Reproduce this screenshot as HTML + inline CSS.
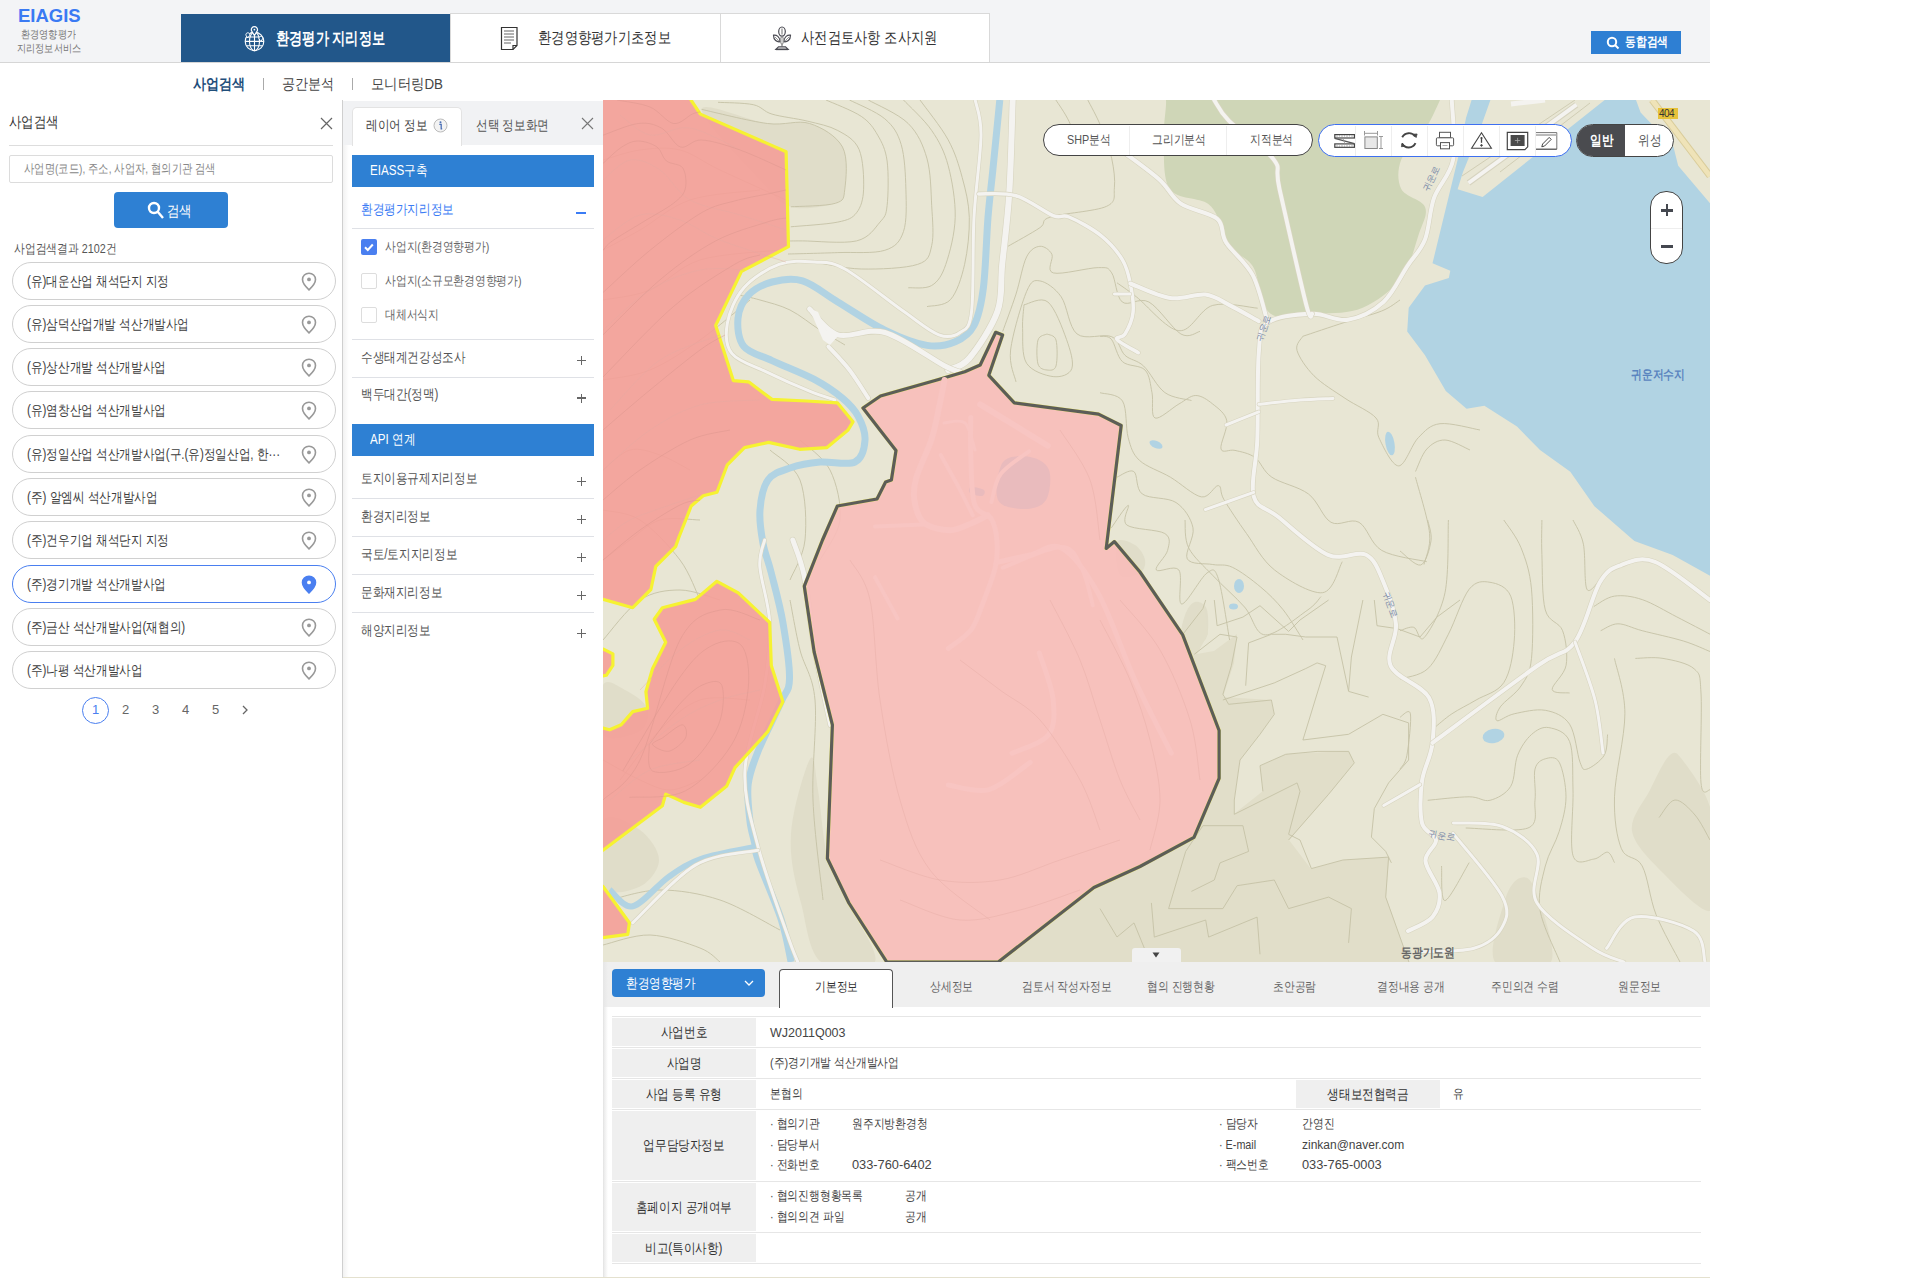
<!DOCTYPE html>
<html><head><meta charset="utf-8">
<style>
*{box-sizing:border-box;margin:0;padding:0}
html,body{width:1920px;height:1278px;overflow:hidden;background:#fff;font-family:"Liberation Sans",sans-serif;color:#333}
.a{position:absolute}
.k{display:inline-block;transform:scaleX(.83);transform-origin:0 50%;white-space:nowrap}
.c{display:inline-block;transform:scaleX(.83);transform-origin:50% 50%;white-space:nowrap}
.t{position:absolute;white-space:nowrap;line-height:1}
</style></head><body>
<!-- ============ HEADER ============ -->
<div class="a" style="left:0;top:0;width:1710px;height:63px;background:#f3f4f6;border-bottom:1px solid #d6d6d6"></div>
<div class="t" style="left:18px;top:7px;font-size:18.5px;font-weight:bold;color:#3a7af3">EIAGIS</div>
<div class="t" style="left:21px;top:29px;font-size:11px;color:#777"><span class="k">환경영향평가</span></div>
<div class="t" style="left:17px;top:43px;font-size:11px;color:#777"><span class="k">지리정보서비스</span></div>
<div class="a" style="left:181px;top:14px;width:269px;height:48px;background:#22578a"></div>
<div class="a" style="left:450px;top:13px;width:540px;height:49px;background:#fff;border:1px solid #d9d9d9;border-bottom:none"></div>
<div class="a" style="left:720px;top:13px;width:1px;height:49px;background:#d9d9d9"></div>
<!-- globe icon -->
<svg class="a" style="left:240px;top:24px" width="30" height="30" viewBox="240 24 30 30" fill="none" stroke="#fff" stroke-width="1.1">
 <circle cx="254.5" cy="41.4" r="9.3"/><ellipse cx="254.5" cy="41.4" rx="5" ry="9.3"/>
 <path d="M245.2 41.4h18.6M246.3 37h16.4M246.3 45.8h16.4M254.5 32.1v18.6"/>
 <path d="M254.4 35.5 L251.4 30.6 A3.1 3.1 0 1 1 257.4 30.6 Z" fill="#22578a" stroke-width="1.2"/><circle cx="254.4" cy="29.6" r="0.9" fill="#fff" stroke="none"/>
 <path d="M247.8 38 L246 35.3 A1.9 1.9 0 1 1 249.6 35.3 Z" fill="#22578a" stroke-width="1"/>
 <path d="M260.8 41.5 L259 38.8 A1.9 1.9 0 1 1 262.6 38.8 Z" fill="#22578a" stroke-width="1"/>
</svg>
<div class="t" style="left:276px;top:30px;font-size:16.5px;font-weight:bold;color:#fff"><span class="k" style="transform:scaleX(.775)">환경평가 지리정보</span></div>
<!-- doc icon -->
<svg class="a" style="left:500px;top:26px" width="20" height="25" viewBox="0 0 20 25" fill="none" stroke="#333" stroke-width="1.2">
 <path d="M1.5 1.5h15.5v18l-4 4h-11.5z"/><path d="M17 19.5h-4v4" /><path d="M4 5h10M4 8h10M4 11h10M4 14h10M4 17h7" stroke="#666" stroke-width="1"/>
</svg>
<div class="t" style="left:538px;top:30px;font-size:15.5px;color:#333"><span class="k">환경영향평가기초정보</span></div>
<!-- plant icon -->
<svg class="a" style="left:765px;top:22px" width="35" height="32" viewBox="765 22 35 32" fill="none" stroke="#4a4a52" stroke-width="1.2">
 <ellipse cx="782" cy="31.6" rx="3.3" ry="4.6"/><path d="M782 28.5v6" stroke="#888"/>
 <path d="M773.5 35.2c3 -0.5 6.5 1.5 6.5 6.5c-3 0.5 -6.5 -1.5 -6.5 -6.5z"/><path d="M775 37l3.8 3.8" stroke="#888" stroke-width="0.9"/>
 <path d="M790.5 35.2c-3 -0.5 -6.5 1.5 -6.5 6.5c3 0.5 6.5 -1.5 6.5 -6.5z"/><path d="M789 37l-3.8 3.8" stroke="#888" stroke-width="0.9"/>
 <rect x="780.7" y="37" width="2.6" height="7" rx="1.2" fill="#ddd" stroke="#777" stroke-width="0.8"/>
 <path d="M782 44v2.5" stroke="#777"/>
 <path d="M778.5 46.8h7l2.6 2.6h-12.2z" fill="#fff"/><path d="M775.8 49.4h12.4" stroke-width="1.5"/>
</svg>
<div class="t" style="left:801px;top:30px;font-size:15.5px;color:#333"><span class="k">사전검토사항 조사지원</span></div>
<!-- unified search btn -->
<div class="a" style="left:1591px;top:31px;width:90px;height:23px;background:#2e7fd3"></div>
<svg class="a" style="left:1606px;top:36px" width="14" height="14" viewBox="0 0 14 14" fill="none" stroke="#fff" stroke-width="2"><circle cx="6" cy="6" r="4.2"/><path d="M9 9l3.5 3.5"/></svg>
<div class="t" style="left:1625px;top:36px;font-size:12.5px;font-weight:bold;color:#fff"><span class="k">동합검색</span></div>
<!-- ============ SUB NAV ============ -->
<div class="t" style="left:193px;top:76px;font-size:15px;font-weight:bold;color:#1f4e7a"><span class="k" style="transform:scaleX(.87)">사업검색</span></div>
<div class="a" style="left:263px;top:78px;width:1px;height:12px;background:#aaa"></div>
<div class="t" style="left:282px;top:76px;font-size:15px;color:#444"><span class="k" style="transform:scaleX(.87)">공간분석</span></div>
<div class="a" style="left:352px;top:78px;width:1px;height:12px;background:#aaa"></div>
<div class="t" style="left:371px;top:76px;font-size:15px;color:#444"><span class="k" style="transform:scaleX(.89)">모니터링DB</span></div>
<!-- ============ LEFT PANEL ============ -->
<div class="t" style="left:9px;top:114px;font-size:15px;color:#333"><span class="k">사업검색</span></div>
<svg class="a" style="left:320px;top:117px" width="13" height="13" viewBox="0 0 13 13" stroke="#666" stroke-width="1.2"><path d="M1 1l11 11M12 1L1 12"/></svg>
<div class="a" style="left:9px;top:145px;width:324px;height:1px;background:#ddd"></div>
<div class="a" style="left:9px;top:155px;width:324px;height:28px;border:1px solid #dcdcdc;border-radius:2px"></div>
<div class="t" style="left:24px;top:163px;font-size:12.7px;color:#888"><span class="k" style="transform:scaleX(.795)">사업명(코드), 주소, 사업자, 협의기관 검색</span></div>
<div class="a" style="left:114px;top:192px;width:114px;height:36px;background:#2e80d3;border-radius:4px"></div>
<svg class="a" style="left:147px;top:201px" width="18" height="19" viewBox="0 0 18 19" fill="none" stroke="#fff" stroke-width="2.4"><circle cx="7" cy="7" r="5"/><path d="M10.5 10.5l5.5 6.5"/></svg>
<div class="t" style="left:167px;top:203px;font-size:15px;color:#fff"><span class="k">검색</span></div>
<div class="t" style="left:14px;top:242px;font-size:13px;color:#555"><span class="k">사업검색결과 2102건</span></div>
<div class="a" style="left:12px;top:262px;width:324px;height:38px;border:1px solid #d0d0d0;border-radius:19px"></div>
<div class="t" style="left:27px;top:274px;font-size:14px;color:#3d3d3d"><span class="k">(유)대운산업 채석단지 지정</span></div>
<svg class="a" style="left:301px;top:272px" width="16" height="19" viewBox="0 0 16 19"><path d="M8 1.2C4.3 1.2 1.5 4 1.5 7.4c0 4.2 6.5 10.4 6.5 10.4s6.5-6.2 6.5-10.4C14.5 4 11.7 1.2 8 1.2z" fill="none" stroke="#999" stroke-width="1.6"/><circle cx="8" cy="7.4" r="1.9" fill="#999"/></svg>
<div class="a" style="left:12px;top:305px;width:324px;height:38px;border:1px solid #d0d0d0;border-radius:19px"></div>
<div class="t" style="left:27px;top:317px;font-size:14px;color:#3d3d3d"><span class="k">(유)삼덕산업개발 석산개발사업</span></div>
<svg class="a" style="left:301px;top:315px" width="16" height="19" viewBox="0 0 16 19"><path d="M8 1.2C4.3 1.2 1.5 4 1.5 7.4c0 4.2 6.5 10.4 6.5 10.4s6.5-6.2 6.5-10.4C14.5 4 11.7 1.2 8 1.2z" fill="none" stroke="#999" stroke-width="1.6"/><circle cx="8" cy="7.4" r="1.9" fill="#999"/></svg>
<div class="a" style="left:12px;top:348px;width:324px;height:38px;border:1px solid #d0d0d0;border-radius:19px"></div>
<div class="t" style="left:27px;top:360px;font-size:14px;color:#3d3d3d"><span class="k">(유)상산개발 석산개발사업</span></div>
<svg class="a" style="left:301px;top:358px" width="16" height="19" viewBox="0 0 16 19"><path d="M8 1.2C4.3 1.2 1.5 4 1.5 7.4c0 4.2 6.5 10.4 6.5 10.4s6.5-6.2 6.5-10.4C14.5 4 11.7 1.2 8 1.2z" fill="none" stroke="#999" stroke-width="1.6"/><circle cx="8" cy="7.4" r="1.9" fill="#999"/></svg>
<div class="a" style="left:12px;top:391px;width:324px;height:38px;border:1px solid #d0d0d0;border-radius:19px"></div>
<div class="t" style="left:27px;top:403px;font-size:14px;color:#3d3d3d"><span class="k">(유)염창산업 석산개발사업</span></div>
<svg class="a" style="left:301px;top:401px" width="16" height="19" viewBox="0 0 16 19"><path d="M8 1.2C4.3 1.2 1.5 4 1.5 7.4c0 4.2 6.5 10.4 6.5 10.4s6.5-6.2 6.5-10.4C14.5 4 11.7 1.2 8 1.2z" fill="none" stroke="#999" stroke-width="1.6"/><circle cx="8" cy="7.4" r="1.9" fill="#999"/></svg>
<div class="a" style="left:12px;top:435px;width:324px;height:38px;border:1px solid #d0d0d0;border-radius:19px"></div>
<div class="t" style="left:27px;top:447px;font-size:14px;color:#3d3d3d"><span class="k">(유)정일산업 석산개발사업(구.(유)정일산업, 한···</span></div>
<svg class="a" style="left:301px;top:445px" width="16" height="19" viewBox="0 0 16 19"><path d="M8 1.2C4.3 1.2 1.5 4 1.5 7.4c0 4.2 6.5 10.4 6.5 10.4s6.5-6.2 6.5-10.4C14.5 4 11.7 1.2 8 1.2z" fill="none" stroke="#999" stroke-width="1.6"/><circle cx="8" cy="7.4" r="1.9" fill="#999"/></svg>
<div class="a" style="left:12px;top:478px;width:324px;height:38px;border:1px solid #d0d0d0;border-radius:19px"></div>
<div class="t" style="left:27px;top:490px;font-size:14px;color:#3d3d3d"><span class="k">(주) 알엠씨 석산개발사업</span></div>
<svg class="a" style="left:301px;top:488px" width="16" height="19" viewBox="0 0 16 19"><path d="M8 1.2C4.3 1.2 1.5 4 1.5 7.4c0 4.2 6.5 10.4 6.5 10.4s6.5-6.2 6.5-10.4C14.5 4 11.7 1.2 8 1.2z" fill="none" stroke="#999" stroke-width="1.6"/><circle cx="8" cy="7.4" r="1.9" fill="#999"/></svg>
<div class="a" style="left:12px;top:521px;width:324px;height:38px;border:1px solid #d0d0d0;border-radius:19px"></div>
<div class="t" style="left:27px;top:533px;font-size:14px;color:#3d3d3d"><span class="k">(주)건우기업 채석단지 지정</span></div>
<svg class="a" style="left:301px;top:531px" width="16" height="19" viewBox="0 0 16 19"><path d="M8 1.2C4.3 1.2 1.5 4 1.5 7.4c0 4.2 6.5 10.4 6.5 10.4s6.5-6.2 6.5-10.4C14.5 4 11.7 1.2 8 1.2z" fill="none" stroke="#999" stroke-width="1.6"/><circle cx="8" cy="7.4" r="1.9" fill="#999"/></svg>
<div class="a" style="left:12px;top:565px;width:324px;height:38px;border:1px solid #4a7ff0;border-radius:19px"></div>
<div class="t" style="left:27px;top:577px;font-size:14px;color:#3d3d3d"><span class="k">(주)경기개발 석산개발사업</span></div>
<svg class="a" style="left:301px;top:575px" width="16" height="19" viewBox="0 0 16 19"><path d="M8 1.2C4.3 1.2 1.5 4 1.5 7.4c0 4.2 6.5 10.4 6.5 10.4s6.5-6.2 6.5-10.4C14.5 4 11.7 1.2 8 1.2z" fill="#4a7ff0" stroke="#4a7ff0" stroke-width="1.6"/><circle cx="8" cy="7.4" r="1.9" fill="#fff"/></svg>
<div class="a" style="left:12px;top:608px;width:324px;height:38px;border:1px solid #d0d0d0;border-radius:19px"></div>
<div class="t" style="left:27px;top:620px;font-size:14px;color:#3d3d3d"><span class="k">(주)금산 석산개발사업(재협의)</span></div>
<svg class="a" style="left:301px;top:618px" width="16" height="19" viewBox="0 0 16 19"><path d="M8 1.2C4.3 1.2 1.5 4 1.5 7.4c0 4.2 6.5 10.4 6.5 10.4s6.5-6.2 6.5-10.4C14.5 4 11.7 1.2 8 1.2z" fill="none" stroke="#999" stroke-width="1.6"/><circle cx="8" cy="7.4" r="1.9" fill="#999"/></svg>
<div class="a" style="left:12px;top:651px;width:324px;height:38px;border:1px solid #d0d0d0;border-radius:19px"></div>
<div class="t" style="left:27px;top:663px;font-size:14px;color:#3d3d3d"><span class="k">(주)나평 석산개발사업</span></div>
<svg class="a" style="left:301px;top:661px" width="16" height="19" viewBox="0 0 16 19"><path d="M8 1.2C4.3 1.2 1.5 4 1.5 7.4c0 4.2 6.5 10.4 6.5 10.4s6.5-6.2 6.5-10.4C14.5 4 11.7 1.2 8 1.2z" fill="none" stroke="#999" stroke-width="1.6"/><circle cx="8" cy="7.4" r="1.9" fill="#999"/></svg>
<div class="a" style="left:82px;top:697px;width:27px;height:27px;border:1px solid #4a7ff0;border-radius:50%"></div>
<div class="t" style="left:85.5px;top:703px;width:20px;text-align:center;font-size:13px;color:#4a7ff0">1</div>
<div class="t" style="left:115.5px;top:703px;width:20px;text-align:center;font-size:13px;color:#666">2</div>
<div class="t" style="left:145.5px;top:703px;width:20px;text-align:center;font-size:13px;color:#666">3</div>
<div class="t" style="left:175.5px;top:703px;width:20px;text-align:center;font-size:13px;color:#666">4</div>
<div class="t" style="left:205.5px;top:703px;width:20px;text-align:center;font-size:13px;color:#666">5</div>
<svg class="a" style="left:241px;top:705px" width="8" height="10" viewBox="0 0 8 10" fill="none" stroke="#666" stroke-width="1.3"><path d="M2 1l4 4-4 4"/></svg>
<!--LEFT-->
<div class="a" style="left:342px;top:100px;width:1px;height:1178px;background:#cfcfcf"></div>
<div class="a" style="left:343px;top:145px;width:6px;height:1133px;background:linear-gradient(to right,#f2f2f2,rgba(255,255,255,0))"></div>
<div class="a" style="left:343px;top:101px;width:260px;height:44px;background:#f1f2f4"></div>
<div class="a" style="left:352px;top:107px;width:110px;height:39px;background:#fff;border:1px solid #e3e3e3;border-bottom:none;border-radius:5px 5px 0 0"></div>
<div class="t" style="left:366px;top:118px;font-size:14px;color:#444"><span class="k">레이어 정보</span></div>
<svg class="a" style="left:433px;top:118px" width="15" height="15" viewBox="0 0 15 15"><circle cx="7.5" cy="7.5" r="6.5" fill="#f3f3f3" stroke="#bbb"/><circle cx="7.5" cy="4.3" r="1" fill="#4a6fb5"/><path d="M6.3 6.3h1.9v4.5h1" stroke="#4a6fb5" stroke-width="1.3" fill="none"/></svg>
<div class="t" style="left:476px;top:118px;font-size:14px;color:#555"><span class="k">선택 정보화면</span></div>
<svg class="a" style="left:581px;top:117px" width="13" height="13" viewBox="0 0 13 13" stroke="#777" stroke-width="1.1"><path d="M1 1l11 11M12 1L1 12"/></svg>
<div class="a" style="left:352px;top:155px;width:242px;height:32px;background:#2e80d3"></div>
<div class="t" style="left:370px;top:163px;font-size:14px;color:#fff"><span class="k">EIASS구축</span></div>
<div class="t" style="left:361px;top:202px;font-size:14px;color:#3b7cf5"><span class="k">환경평가지리정보</span></div>
<div class="a" style="left:576px;top:212px;width:10px;height:2px;background:#3b7cf5"></div>
<div class="a" style="left:352px;top:228px;width:242px;height:1px;background:#dfe1e6"></div>
<div class="a" style="left:361px;top:239px;width:16px;height:16px;background:#4a7ff0;border-radius:2px"></div>
<svg class="a" style="left:361px;top:239px" width="16" height="16" viewBox="0 0 16 16" fill="none" stroke="#fff" stroke-width="2"><path d="M4 8.2l2.8 2.8 5-5.5"/></svg>
<div class="t" style="left:385px;top:240px;font-size:13px;color:#666"><span class="k">사업지(환경영향평가)</span></div>
<div class="a" style="left:361px;top:273px;width:16px;height:16px;border:1px solid #ddd;border-radius:2px;background:#fff"></div>
<div class="t" style="left:385px;top:274px;font-size:13px;color:#666"><span class="k">사업지(소규모환경영향평가)</span></div>
<div class="a" style="left:361px;top:306.5px;width:16px;height:16px;border:1px solid #ddd;border-radius:2px;background:#fff"></div>
<div class="t" style="left:385px;top:307.5px;font-size:13px;color:#666"><span class="k">대체서식지</span></div>
<div class="a" style="left:352px;top:339px;width:242px;height:1px;background:#dfe1e6"></div>
<div class="t" style="left:361px;top:350px;font-size:14px;color:#555"><span class="k">수생태계건강성조사</span></div>
<div class="a" style="left:577px;top:359.9px;width:9px;height:1.3px;background:#666"></div>
<div class="a" style="left:580.9px;top:356.0px;width:1.3px;height:9px;background:#666"></div>
<div class="a" style="left:352px;top:377px;width:242px;height:1px;background:#dfe1e6"></div>
<div class="t" style="left:361px;top:387px;font-size:14px;color:#555"><span class="k">백두대간(정맥)</span></div>
<div class="a" style="left:577px;top:397.4px;width:9px;height:1.3px;background:#666"></div>
<div class="a" style="left:580.9px;top:393.5px;width:1.3px;height:9px;background:#666"></div>
<div class="a" style="left:352px;top:424px;width:242px;height:32px;background:#2e80d3"></div>
<div class="t" style="left:370px;top:432px;font-size:14px;color:#fff"><span class="k">API 연계</span></div>
<div class="t" style="left:361px;top:471px;font-size:14px;color:#555"><span class="k">토지이용규제지리정보</span></div>
<div class="a" style="left:577px;top:480.9px;width:9px;height:1.3px;background:#666"></div>
<div class="a" style="left:580.9px;top:477.0px;width:1.3px;height:9px;background:#666"></div>
<div class="a" style="left:352px;top:498px;width:242px;height:1px;background:#dfe1e6"></div>
<div class="t" style="left:361px;top:509px;font-size:14px;color:#555"><span class="k">환경지리정보</span></div>
<div class="a" style="left:577px;top:518.9px;width:9px;height:1.3px;background:#666"></div>
<div class="a" style="left:580.9px;top:515.0px;width:1.3px;height:9px;background:#666"></div>
<div class="a" style="left:352px;top:536px;width:242px;height:1px;background:#dfe1e6"></div>
<div class="t" style="left:361px;top:547px;font-size:14px;color:#555"><span class="k">국토/토지지리정보</span></div>
<div class="a" style="left:577px;top:556.9px;width:9px;height:1.3px;background:#666"></div>
<div class="a" style="left:580.9px;top:553.0px;width:1.3px;height:9px;background:#666"></div>
<div class="a" style="left:352px;top:574px;width:242px;height:1px;background:#dfe1e6"></div>
<div class="t" style="left:361px;top:585px;font-size:14px;color:#555"><span class="k">문화재지리정보</span></div>
<div class="a" style="left:577px;top:594.9px;width:9px;height:1.3px;background:#666"></div>
<div class="a" style="left:580.9px;top:591.0px;width:1.3px;height:9px;background:#666"></div>
<div class="a" style="left:352px;top:612px;width:242px;height:1px;background:#dfe1e6"></div>
<div class="t" style="left:361px;top:623px;font-size:14px;color:#555"><span class="k">해양지리정보</span></div>
<div class="a" style="left:577px;top:632.9px;width:9px;height:1.3px;background:#666"></div>
<div class="a" style="left:580.9px;top:629.0px;width:1.3px;height:9px;background:#666"></div>
<!--LAYER-->
<!--MAPSTART--><svg class="a" style="left:603px;top:100px" width="1107" height="862" viewBox="603 100 1107 862">
<rect x="603" y="100" width="1107" height="862" fill="#e8e6d4"/>
<path d="M701.6,109.4 C702.8,100.0 749.4,121.2 767.4,123.5 C785.4,125.8 797.1,119.6 809.6,123.5 C822.1,127.4 836.6,136.1 842.5,147.0 C848.4,157.9 846.0,179.8 844.8,189.2 C843.6,198.6 844.4,200.4 835.4,203.3 C826.4,206.2 803.4,210.7 790.8,206.8 C778.2,202.9 774.9,196.2 760.0,180.0 C745.1,163.8 700.4,118.8 701.6,109.4 Z" fill="#e0ddc9"/>
<path d="M811.0,757.8 C814.9,754.4 815.2,773.0 818.0,790.0 C820.8,807.0 823.0,841.2 828.0,860.0 C833.0,878.8 840.2,886.0 848.0,903.0 C855.8,920.0 879.5,952.0 875.0,961.8 C870.5,971.6 833.1,971.6 820.8,961.8 C808.5,952.0 806.0,921.0 801.0,903.0 C796.0,885.0 792.2,868.9 791.1,853.5 C790.0,838.1 791.1,826.6 794.4,810.6 C797.7,794.6 807.1,761.2 811.0,757.8 Z" fill="#e0ddc9"/>
<path d="M603.0,685.0 C606.7,677.5 617.7,686.2 625.0,690.0 C632.3,693.8 644.5,701.2 647.0,708.0 C649.5,714.8 647.3,726.5 640.0,731.0 C632.7,735.5 609.2,742.7 603.0,735.0 C596.8,727.3 599.3,692.5 603.0,685.0 Z" fill="#e0ddc9"/>
<path d="M603.0,820.5 C609.2,811.1 630.7,823.4 640.0,830.0 C649.3,836.6 659.0,850.6 659.0,860.0 C659.0,869.4 649.3,882.1 640.0,886.5 C630.7,890.9 609.2,897.5 603.0,886.5 C596.8,875.5 596.8,829.9 603.0,820.5 Z" fill="#e0ddc9"/>
<path d="M1117.0,542.0 C1119.5,537.0 1130.3,542.0 1135.0,545.0 C1139.7,548.0 1144.2,555.3 1145.0,560.0 C1145.8,564.7 1144.2,570.5 1140.0,573.0 C1135.8,575.5 1123.8,580.2 1120.0,575.0 C1116.2,569.8 1114.5,547.0 1117.0,542.0 Z" fill="#e0ddc9"/>
<path d="M1195.0,602.0 C1198.7,601.2 1205.3,603.7 1207.0,610.0 C1208.7,616.3 1209.2,635.0 1205.0,640.0 C1200.8,645.0 1185.3,644.2 1182.0,640.0 C1178.7,635.8 1182.8,621.3 1185.0,615.0 C1187.2,608.7 1191.3,602.8 1195.0,602.0 Z" fill="#e0ddc9"/>
<path d="M1183.0,634.0 L1204.0,603.0 L1208.0,634.0 L1197.0,654.0 L1214.0,651.0 L1237.0,634.0 L1234.0,663.0 L1223.0,697.0 L1271.0,700.0 L1274.0,714.0 L1260.0,734.0 L1240.0,760.0 L1234.0,800.0 L1234.0,814.0 L1263.0,791.0 L1260.0,766.0 L1286.0,754.0 L1349.0,751.0 L1354.0,763.0 L1329.0,794.0 L1289.0,840.0 L1311.0,869.0 L1343.0,860.0 L1389.0,857.0 L1386.0,897.0 L1400.0,937.0 L1410.0,965.0 L998.0,965.0 L1094.0,888.0 L1194.0,837.0 L1219.0,778.0 L1219.0,730.0 Z" fill="#e1dec9"/>
<path d="M1632.0,831.0 C1629.8,817.2 1643.7,802.7 1650.0,790.0 C1656.3,777.3 1664.3,759.7 1670.0,755.0 C1675.7,750.3 1677.3,753.3 1684.0,762.0 C1690.7,770.7 1705.3,790.7 1710.0,807.0 C1714.7,823.3 1712.0,842.7 1712.0,860.0 C1712.0,877.3 1718.2,908.8 1710.0,911.0 C1701.8,913.2 1676.0,886.3 1663.0,873.0 C1650.0,859.7 1634.2,844.8 1632.0,831.0 Z" fill="#e0ddc9"/>
<path d="M1520.0,878.0 C1525.0,876.3 1529.8,876.0 1535.0,890.0 C1540.2,904.0 1557.7,950.0 1551.0,962.0 C1544.3,974.0 1502.7,972.3 1495.0,962.0 C1487.3,951.7 1500.8,914.0 1505.0,900.0 C1509.2,886.0 1515.0,879.7 1520.0,878.0 Z" fill="#e0ddc9"/>
<path d="M1160.0,88.0 C1137.7,91.3 1165.4,91.6 1166.0,100.0 C1166.6,108.4 1163.2,123.8 1163.8,138.6 C1164.4,153.4 1162.3,178.1 1169.7,189.0 C1177.1,199.9 1199.4,197.1 1208.3,204.0 C1217.2,210.9 1219.5,223.2 1223.0,230.6 C1226.5,238.0 1224.0,242.6 1229.0,248.5 C1234.0,254.4 1245.9,255.4 1252.8,266.3 C1259.7,277.2 1259.7,305.9 1270.6,313.8 C1281.5,321.7 1302.7,314.8 1318.0,313.8 C1333.3,312.8 1348.8,313.8 1362.7,307.8 C1376.6,301.8 1391.9,290.4 1401.3,278.0 C1410.7,265.6 1415.0,245.4 1419.0,233.6 C1423.0,221.8 1428.0,214.3 1425.0,206.9 C1422.0,199.5 1405.2,196.9 1401.3,189.0 C1397.3,181.1 1397.3,169.3 1401.3,159.4 C1405.2,149.5 1418.5,139.6 1425.0,129.7 C1431.5,119.8 1436.7,107.0 1440.0,100.0 C1443.3,93.0 1468.3,91.3 1445.0,88.0 C1421.7,84.7 1347.5,80.0 1300.0,80.0 C1252.5,80.0 1182.3,84.7 1160.0,88.0 Z" fill="#cfd6b7"/>
<path d="M1471.6,100.0 L1466.0,118.0 L1457.7,159.4 L1432.5,263.3 L1450.3,270.7 L1448.8,278.1 L1425.0,285.6 L1408.7,307.8 L1407.2,331.6 L1425.0,355.3 L1445.8,391.0 L1466.6,408.8 L1484.4,405.8 L1517.0,426.6 L1540.0,450.0 L1570.3,471.8 L1594.4,506.2 L1622.0,530.3 L1634.4,541.0 L1672.7,555.0 L1710.0,575.7 L1710.0,203.3 L1678.2,165.7 L1673.5,147.0 L1640.6,112.5 L1636.0,100.0 Z" fill="#b1d3e3"/>
<path d="M1490.4,100.0 L1604.7,100.0 L1482.6,197.0 L1457.6,189.2 L1463.0,172.0 L1478.0,135.0 Z" fill="#e8e6d4"/>
<path d="M1468.5,183 L1576.5,104.7" stroke="#d6d3bf" stroke-width="6" fill="none"/><path d="M1468.5,183 L1576.5,104.7" stroke="#f4f3f0" stroke-width="4" fill="none"/>
<path d="M1500,172 L1590,103" stroke="#cdcab0" stroke-width="0.9" fill="none"/><path d="M1462,176 L1575,100" stroke="#cdcab0" stroke-width="0.9" fill="none"/>
<path d="M1511,104 Q1530,102 1545,100" stroke="#f4f3f0" stroke-width="5" fill="none"/>
<path d="M1652,100 L1710,176" stroke="#d9cc9a" stroke-width="7" fill="none"/><path d="M1652,100 L1710,176" stroke="#efe3b8" stroke-width="5" fill="none"/>
<ellipse cx="1156" cy="444.5" rx="7" ry="3.5" transform="rotate(25 1156 444.5)" fill="#b1d3e3"/>
<ellipse cx="1239" cy="586" rx="5" ry="7" transform="rotate(0 1239 586)" fill="#b1d3e3"/>
<ellipse cx="1233.5" cy="606.5" rx="4.5" ry="3" transform="rotate(0 1233.5 606.5)" fill="#b1d3e3"/>
<ellipse cx="1493.5" cy="736" rx="11" ry="7" transform="rotate(-10 1493.5 736)" fill="#b1d3e3"/>
<ellipse cx="1390" cy="443.5" rx="4.5" ry="12" transform="rotate(-10 1390 443.5)" fill="#b1d3e3"/>
<path d="M1194.3,654.3 L1220.0,634.3 L1237.0,637.0 L1231.4,665.7 L1222.9,694.3 L1228.6,704.3 L1271.4,700.0 L1274.3,714.3 L1260.0,734.3 L1240.0,760.0 L1234.3,800.0 L1234.3,814.3 L1297.1,782.9 L1300.0,791.4 L1288.6,834.3 L1300.0,840.0 L1311.4,868.6 L1342.9,860.0 L1388.6,857.1 L1385.7,897.1 L1400.0,937.1 L1410.0,965.0" fill="none" stroke="#c5c2a6" stroke-width="0.9" stroke-linejoin="round"/>
<path d="M1302.9,740.0 L1325.7,665.7 L1317.1,662.9 L1305.7,668.6 L1274.3,682.9 L1222.9,700.0" fill="none" stroke="#c5c2a6" stroke-width="0.9" stroke-linejoin="round"/>
<path d="M1302.9,740.0 L1348.6,734.3 L1382.9,714.3 L1408.6,722.9 L1408.6,760.0 L1388.6,782.9 L1374.3,808.6 L1371.4,837.1 L1385.7,851.4 L1391.4,862.9" fill="none" stroke="#c5c2a6" stroke-width="0.9" stroke-linejoin="round"/>
<path d="M1262.9,791.4 L1260.0,765.7 L1285.7,754.3 L1317.1,751.4 L1348.6,751.4 L1354.3,762.9 L1328.6,794.3 L1288.6,840.0" fill="none" stroke="#c5c2a6" stroke-width="0.9" stroke-linejoin="round"/>
<path d="M1191.4,891.4 L1214.3,880.0 L1220.0,862.9 L1248.6,851.4 L1242.9,825.7 L1202.9,825.7 L1185.7,851.4 L1168.6,908.6 L1222.9,908.6 L1237.1,885.7 L1274.3,880.0 L1288.6,908.6 L1328.6,897.1 L1351.4,908.6 L1348.6,942.9" fill="none" stroke="#c5c2a6" stroke-width="0.9" stroke-linejoin="round"/>
<path d="M1151.4,902.9 L1154.3,937.1 L1205.7,920.0 L1208.6,937.1 L1257.1,917.1 L1260.0,954.3" fill="none" stroke="#c5c2a6" stroke-width="0.9" stroke-linejoin="round"/>
<path d="M1100.0,908.6 L1117.0,937.0 L1134.0,922.9 L1150.0,962.0" fill="none" stroke="#c5c2a6" stroke-width="0.9" stroke-linejoin="round"/>
<path d="M1245.7,685.7 L1248.6,642.9 L1271.4,634.3 L1285.7,634.3 L1305.7,637.0 L1337.0,637.0 L1348.6,691.4 L1368.6,697.1" fill="none" stroke="#c5c2a6" stroke-width="0.9" stroke-linejoin="round"/>
<path d="M1214.3,600.0 L1217.1,625.7 L1242.9,617.1 L1260.0,605.7 L1288.6,631.4 L1300.0,620.0 L1328.6,600.0" fill="none" stroke="#c5c2a6" stroke-width="0.9" stroke-linejoin="round"/>
<path d="M1362.9,600.0 L1351.4,657.0 L1348.6,691.0" fill="none" stroke="#c5c2a6" stroke-width="0.9" stroke-linejoin="round"/>
<path d="M1374.3,600.0 L1377.0,625.7 L1397.0,628.6 L1420.0,637.0 L1437.0,617.0 L1460.0,600.0" fill="none" stroke="#c5c2a6" stroke-width="0.9" stroke-linejoin="round"/>
<path d="M1182.9,634.3 L1202.9,608.6 L1205.7,600.0" fill="none" stroke="#c5c2a6" stroke-width="0.9" stroke-linejoin="round"/>
<path d="M718.0,102.3 C723.9,102.7 744.3,102.7 753.3,104.7 C762.3,106.7 763.0,111.4 772.0,114.1 C781.0,116.8 796.3,118.4 807.3,121.1 C818.3,123.8 829.2,125.8 837.8,130.5 C846.4,135.2 854.7,139.5 859.0,149.3 C863.3,159.1 864.0,178.6 863.6,189.2 C863.2,199.8 860.9,207.2 856.6,212.7 C852.3,218.2 848.8,219.8 837.8,222.1 C826.8,224.4 798.6,226.0 790.8,226.8" fill="none" stroke="#c5c2a6" stroke-width="0.9"/>
<path d="M826.0,100.0 C831.9,102.7 852.7,110.5 861.3,116.4 C869.9,122.3 873.4,127.8 877.7,135.2 C882.0,142.6 885.5,149.2 887.1,161.0 C888.7,172.8 888.3,195.5 887.1,205.7 C885.9,215.9 885.1,216.2 880.0,222.1 C874.9,228.0 869.5,237.8 856.6,240.9 C843.7,244.0 814.0,240.9 802.6,240.9 C791.2,240.9 790.4,241.0 788.0,241.0" fill="none" stroke="#c5c2a6" stroke-width="0.9"/>
<path d="M849.5,100.0 C855.4,103.1 876.2,111.4 884.8,118.8 C893.4,126.2 897.7,132.9 901.2,144.6 C904.7,156.3 905.5,174.7 905.9,189.2 C906.3,203.7 907.0,221.3 903.5,231.5 C900.0,241.7 895.8,246.8 884.8,250.3 C873.8,253.8 853.9,252.0 837.8,252.6 C821.7,253.2 796.3,253.8 788.0,254.0" fill="none" stroke="#c5c2a6" stroke-width="0.9"/>
<path d="M868.3,100.0 C874.9,103.9 898.4,113.7 908.2,123.5 C918.0,133.3 923.1,145.0 927.0,158.7 C930.9,172.4 930.9,191.2 931.7,205.7 C932.5,220.2 934.1,235.8 931.7,245.6 C929.4,255.4 929.3,260.5 917.6,264.4 C905.9,268.3 878.5,269.4 861.3,269.0 C844.1,268.6 822.1,263.2 814.3,262.0" fill="none" stroke="#c5c2a6" stroke-width="0.9"/>
<path d="M903.5,100.0 C908.2,105.1 924.2,119.5 931.7,130.5 C939.2,141.4 944.3,151.2 948.2,165.7 C952.1,180.2 955.6,201.0 955.2,217.4 C954.8,233.8 949.7,253.0 945.8,264.4 C941.9,275.8 938.0,281.6 931.7,285.5 C925.4,289.4 912.1,287.4 908.2,287.8" fill="none" stroke="#c5c2a6" stroke-width="0.9"/>
<path d="M920.0,100.0 C924.7,106.7 941.2,127.0 948.2,139.9 C955.2,152.8 958.7,164.6 962.2,177.5 C965.7,190.4 968.9,202.9 969.3,217.4 C969.7,231.9 967.7,250.7 964.6,264.4 C961.5,278.1 956.8,292.6 950.5,299.6 C944.2,306.6 930.9,305.4 927.0,306.6" fill="none" stroke="#c5c2a6" stroke-width="0.9"/>
<path d="M701.6,109.4 C712.6,111.8 749.4,121.2 767.4,123.5 C785.4,125.8 797.1,119.6 809.6,123.5 C822.1,127.4 836.6,136.1 842.5,147.0 C848.4,157.9 846.0,179.8 844.8,189.2 C843.6,198.6 844.4,200.4 835.4,203.3 C826.4,206.2 798.2,206.2 790.8,206.8" fill="none" stroke="#c5c2a6" stroke-width="0.9"/>
<path d="M1047.0,334.0 C1048.5,335.0 1054.5,334.7 1056.0,340.0 C1057.5,345.3 1057.5,361.0 1056.0,366.0 C1054.5,371.0 1050.0,370.3 1047.0,370.0 C1044.0,369.7 1039.5,369.0 1038.0,364.0 C1036.5,359.0 1036.5,345.0 1038.0,340.0 C1039.5,335.0 1045.5,335.0 1047.0,334.0" fill="none" stroke="#c5c2a6" stroke-width="0.9"/>
<path d="M1024.0,304.8 C1028.0,304.3 1040.8,296.2 1047.9,302.0 C1055.0,307.8 1062.5,328.3 1066.5,339.4 C1070.5,350.5 1074.0,362.4 1071.8,368.6 C1069.6,374.8 1060.7,377.5 1053.2,376.6 C1045.7,375.7 1031.7,371.3 1026.6,363.3 C1021.5,355.3 1023.0,338.4 1022.6,328.7 C1022.2,318.9 1023.8,308.8 1024.0,304.8" fill="none" stroke="#c5c2a6" stroke-width="0.9"/>
<path d="M1016.0,381.9 C1015.1,376.6 1008.8,365.1 1010.6,350.0 C1012.4,334.9 1021.7,303.0 1026.6,291.5 C1031.5,280.0 1034.1,280.0 1039.9,280.9 C1045.7,281.8 1055.0,287.9 1061.2,296.8 C1067.4,305.7 1068.7,327.4 1077.1,334.0 C1085.5,340.6 1103.7,333.1 1111.7,336.7 C1119.7,340.2 1119.7,350.4 1125.0,355.3 C1130.3,360.2 1136.9,359.8 1143.6,366.0 C1150.2,372.2 1156.9,386.9 1164.9,392.6 C1172.9,398.4 1187.1,399.2 1191.5,400.5" fill="none" stroke="#c5c2a6" stroke-width="0.9"/>
<path d="M1002.7,331.4 C1004.9,325.2 1012.0,306.5 1016.0,294.1 C1020.0,281.7 1022.6,264.9 1026.6,256.9 C1030.6,248.9 1035.7,246.7 1039.9,246.3 C1044.1,245.9 1049.7,249.9 1051.9,254.3 C1054.1,258.7 1045.5,270.7 1053.2,272.9 C1061.0,275.1 1088.7,267.6 1098.4,267.6 C1108.2,267.6 1107.7,267.2 1111.7,272.9 C1115.7,278.6 1116.1,297.1 1122.3,302.0 C1128.5,306.9 1139.1,296.7 1148.9,302.0 C1158.7,307.3 1172.4,329.1 1180.9,334.0 C1189.4,338.9 1196.8,331.8 1200.0,331.4" fill="none" stroke="#c5c2a6" stroke-width="0.9"/>
<path d="M1008.0,246.3 C1013.3,243.2 1032.8,232.6 1039.9,227.7 C1047.0,222.8 1039.4,220.6 1050.5,217.0 C1061.6,213.4 1095.8,211.3 1106.4,206.4 C1117.1,201.5 1113.5,195.8 1114.4,187.8 C1115.3,179.8 1113.9,168.7 1111.7,158.5 C1109.5,148.3 1105.0,136.3 1101.0,126.6 C1097.0,116.8 1090.0,104.4 1087.8,100.0" fill="none" stroke="#c5c2a6" stroke-width="0.9"/>
<path d="M1055.9,100.0 C1058.1,103.5 1065.0,113.0 1069.0,121.3 C1073.0,129.6 1078.2,145.2 1080.0,150.0" fill="none" stroke="#c5c2a6" stroke-width="0.9"/>
<path d="M1100.0,336.3 C1101.9,336.8 1107.5,335.0 1111.3,339.2 C1115.0,343.4 1116.9,356.6 1122.5,361.7 C1128.1,366.8 1140.1,364.8 1145.0,370.0 C1149.9,375.2 1150.3,384.7 1152.0,392.7 C1153.7,400.7 1150.5,416.1 1155.0,418.0 C1159.5,419.9 1172.1,407.8 1178.9,404.0 C1185.7,400.2 1190.2,395.5 1195.8,395.5 C1201.4,395.5 1207.5,399.8 1212.7,404.0 C1217.9,408.2 1225.4,413.3 1226.8,420.8 C1228.2,428.3 1219.6,444.1 1221.0,449.0 C1222.4,453.9 1229.3,449.0 1235.0,450.4 C1240.7,451.8 1248.9,453.0 1255.0,457.5 C1261.1,462.0 1262.9,471.1 1271.8,477.2 C1280.7,483.3 1298.6,486.5 1308.5,494.0 C1318.4,501.5 1322.6,517.6 1331.0,522.3 C1339.4,527.0 1350.5,517.6 1359.0,522.3 C1367.5,527.0 1370.4,543.8 1381.7,550.4 C1393.0,557.0 1419.3,559.8 1426.8,561.7" fill="none" stroke="#c5c2a6" stroke-width="0.9"/>
<path d="M1117.0,282.8 C1120.3,285.2 1126.3,289.0 1136.6,297.0 C1146.9,305.0 1166.2,329.3 1178.9,330.7 C1191.6,332.1 1199.6,309.1 1212.7,305.4 C1225.8,301.6 1250.2,307.7 1257.7,308.2" fill="none" stroke="#c5c2a6" stroke-width="0.9"/>
<path d="M1100.0,392.7 C1103.8,394.1 1117.8,393.5 1122.5,401.0 C1127.2,408.5 1125.4,427.8 1128.2,437.7 C1131.0,447.6 1132.4,453.7 1139.4,460.3 C1146.4,466.9 1160.1,471.1 1170.4,477.2 C1180.7,483.3 1193.4,495.5 1201.4,496.9 C1209.4,498.3 1214.5,485.1 1218.3,485.6 C1222.1,486.1 1219.3,491.7 1224.0,499.7 C1228.7,507.7 1238.1,521.8 1246.5,533.5 C1254.9,545.2 1261.9,560.1 1274.6,570.0 C1287.3,579.9 1311.2,594.1 1322.5,592.7 C1333.8,591.3 1339.0,566.9 1342.3,561.7" fill="none" stroke="#c5c2a6" stroke-width="0.9"/>
<path d="M1117.0,477.2 C1119.8,476.2 1129.6,468.7 1133.8,471.5 C1138.0,474.3 1135.3,488.8 1142.3,494.0 C1149.3,499.2 1167.5,496.9 1176.0,502.5 C1184.5,508.1 1191.1,518.5 1193.0,527.9 C1194.9,537.3 1184.0,552.8 1187.3,558.9 C1190.6,565.0 1205.2,563.1 1212.7,564.5 C1220.2,565.9 1224.4,563.5 1232.4,567.3 C1240.4,571.0 1252.2,580.0 1260.6,587.0 C1269.0,594.0 1275.9,600.8 1283.0,609.6 C1290.1,618.4 1299.7,634.9 1303.0,640.0" fill="none" stroke="#c5c2a6" stroke-width="0.9"/>
<path d="M1111.3,527.9 C1114.1,524.1 1125.6,505.9 1128.2,505.4 C1130.8,504.9 1120.7,520.3 1126.8,525.0 C1132.9,529.7 1158.0,529.3 1164.8,533.5 C1171.6,537.7 1169.0,544.3 1167.6,550.4 C1166.2,556.5 1154.4,566.7 1156.3,570.0 C1158.2,573.3 1174.7,564.3 1178.9,570.0 C1183.1,575.7 1177.0,603.5 1181.7,604.0 C1186.4,604.5 1200.9,577.2 1207.0,573.0 C1213.1,568.8 1214.5,567.4 1218.3,578.6 C1222.1,589.8 1227.7,629.8 1229.6,640.0" fill="none" stroke="#c5c2a6" stroke-width="0.9"/>
<path d="M1302.8,336.3 C1301.8,338.6 1295.1,343.8 1297.0,350.4 C1298.9,357.0 1306.0,367.8 1314.0,375.8 C1322.0,383.8 1334.7,391.3 1345.0,398.3 C1355.3,405.3 1370.3,411.4 1376.0,418.0 C1381.7,424.6 1375.1,429.7 1378.9,437.7 C1382.7,445.7 1392.0,465.9 1398.6,465.9 C1405.2,465.9 1411.4,444.7 1418.3,437.7 C1425.2,430.7 1429.7,425.0 1440.0,423.7 C1450.3,422.4 1473.3,428.9 1480.0,430.0" fill="none" stroke="#c5c2a6" stroke-width="0.9"/>
<path d="M1302.8,336.3 C1309.8,334.0 1331.8,326.5 1345.0,322.3 C1358.2,318.1 1372.5,314.7 1381.7,311.0 C1390.9,307.3 1397.0,301.8 1400.0,300.0" fill="none" stroke="#c5c2a6" stroke-width="0.9"/>
<path d="M1415.5,471.5 C1417.4,467.8 1421.9,454.2 1426.8,449.0 C1431.7,443.8 1437.8,439.8 1445.0,440.0 C1452.2,440.2 1465.8,448.3 1470.0,450.0" fill="none" stroke="#c5c2a6" stroke-width="0.9"/>
<path d="M1415.5,477.2 C1417.8,486.6 1428.2,519.0 1429.6,533.5 C1431.0,548.0 1424.9,559.3 1424.0,564.5" fill="none" stroke="#c5c2a6" stroke-width="0.9"/>
<path d="M1185.0,520.0 C1185.6,524.6 1184.0,538.6 1188.7,547.9 C1193.4,557.2 1203.7,565.9 1213.0,575.7 C1222.3,585.6 1235.8,597.1 1244.5,607.0 C1253.2,616.9 1254.9,634.3 1265.3,634.9 C1275.7,635.5 1297.7,616.9 1307.0,610.5 C1316.3,604.1 1318.7,598.9 1321.0,596.6" fill="none" stroke="#c5c2a6" stroke-width="0.9"/>
<path d="M1400.0,551.0 C1403.5,553.3 1415.6,566.7 1420.8,565.0 C1426.0,563.3 1429.8,548.3 1431.0,540.8 C1432.2,533.3 1428.2,523.5 1427.7,520.0" fill="none" stroke="#c5c2a6" stroke-width="0.9"/>
<path d="M1400.0,630.7 C1402.3,630.1 1409.8,626.1 1413.8,627.3 C1417.8,628.4 1419.0,643.4 1424.2,637.6 C1429.4,631.8 1441.0,612.3 1445.0,592.7 C1449.0,573.1 1447.8,532.1 1448.4,520.0" fill="none" stroke="#c5c2a6" stroke-width="0.9"/>
<path d="M1400.0,679.0 C1404.6,677.3 1419.6,676.3 1427.7,668.8 C1435.8,661.3 1441.5,647.5 1448.4,634.2 C1455.3,620.9 1462.3,597.9 1469.2,589.2 C1476.1,580.6 1483.1,581.1 1490.0,582.3 C1496.9,583.4 1506.7,586.3 1510.7,596.1 C1514.7,605.9 1515.4,626.7 1514.2,641.1 C1513.0,655.5 1510.2,672.8 1503.8,682.6 C1497.4,692.4 1484.8,694.8 1476.1,700.0 C1467.4,705.2 1458.8,709.2 1451.9,713.8 C1445.0,718.4 1437.5,725.3 1434.6,727.6" fill="none" stroke="#c5c2a6" stroke-width="0.9"/>
<path d="M1503.8,520.0 C1506.7,524.6 1516.4,536.2 1521.0,547.7 C1525.6,559.2 1529.8,570.8 1531.5,589.2 C1533.2,607.7 1533.2,642.3 1531.5,658.4 C1529.8,674.5 1526.2,677.9 1521.0,686.0 C1515.8,694.1 1504.3,701.1 1500.3,706.9 C1496.3,712.7 1494.6,719.6 1496.9,720.7 C1499.2,721.9 1506.1,715.5 1514.2,713.8 C1522.3,712.1 1536.1,708.6 1545.3,710.3 C1554.5,712.0 1563.8,715.6 1569.6,724.2 C1575.4,732.9 1577.1,754.7 1580.0,762.2 C1582.9,769.7 1582.9,770.2 1586.9,769.1 C1590.9,768.0 1600.8,761.1 1604.2,755.3 C1607.7,749.5 1607.0,738.0 1607.6,734.5" fill="none" stroke="#c5c2a6" stroke-width="0.9"/>
<path d="M1541.9,520.0 C1541.9,525.8 1541.3,539.6 1541.9,554.6 C1542.5,569.6 1541.8,597.3 1545.3,610.0 C1548.8,622.7 1559.1,621.5 1562.6,630.7 C1566.1,639.9 1567.8,655.5 1566.1,665.3 C1564.4,675.1 1551.6,684.9 1552.2,689.5 C1552.8,694.1 1566.7,692.4 1569.6,693.0" fill="none" stroke="#c5c2a6" stroke-width="0.9"/>
<path d="M1573.0,520.0 C1574.7,524.0 1581.1,532.7 1583.4,544.2 C1585.7,555.7 1584.0,583.4 1586.9,589.2 C1589.8,595.0 1598.4,580.5 1600.7,578.8" fill="none" stroke="#c5c2a6" stroke-width="0.9"/>
<path d="M1427.7,800.3 C1434.6,799.7 1458.8,796.8 1469.2,796.8 C1479.6,796.8 1483.1,802.0 1490.0,800.3 C1496.9,798.6 1506.1,793.9 1510.7,786.4 C1515.3,778.9 1514.1,763.9 1517.6,755.3 C1521.1,746.6 1526.3,739.1 1531.5,734.5 C1536.7,729.9 1542.5,726.4 1548.8,727.6 C1555.1,728.8 1565.6,731.1 1569.6,741.5 C1573.6,751.9 1572.4,770.9 1573.0,789.9 C1573.6,808.9 1569.5,844.1 1573.0,855.6 C1576.5,867.1 1588.0,859.7 1593.8,859.1 C1599.6,858.5 1604.1,851.6 1607.6,852.2 C1611.0,852.8 1613.3,860.9 1614.5,862.6" fill="none" stroke="#c5c2a6" stroke-width="0.9"/>
<path d="M1465.7,828.0 C1476.1,828.0 1516.5,832.6 1528.0,828.0 C1539.5,823.4 1533.8,810.1 1535.0,800.3 C1536.2,790.5 1533.3,776.0 1535.0,769.1 C1536.7,762.2 1541.3,759.9 1545.3,758.8 C1549.3,757.6 1555.8,755.9 1559.2,762.2 C1562.7,768.5 1566.0,785.3 1566.0,796.8 C1566.0,808.3 1562.7,819.9 1559.2,831.4 C1555.8,842.9 1548.5,852.9 1545.3,866.0 C1542.1,879.1 1537.5,894.0 1540.0,910.0 C1542.5,926.0 1556.7,953.3 1560.0,962.0" fill="none" stroke="#c5c2a6" stroke-width="0.9"/>
<path d="M1593.8,606.5 C1597.2,604.8 1606.4,597.2 1614.5,596.1 C1622.6,595.0 1631.8,596.1 1642.2,599.6 C1652.6,603.1 1665.5,611.1 1676.8,616.9 C1688.1,622.7 1704.5,631.3 1710.0,634.2" fill="none" stroke="#c5c2a6" stroke-width="0.9"/>
<path d="M1600.7,630.7 C1603.6,629.6 1611.1,623.8 1618.0,623.8 C1624.9,623.8 1631.2,627.8 1642.2,630.7 C1653.2,633.6 1672.4,637.6 1683.7,641.1 C1695.0,644.6 1705.6,649.8 1710.0,651.5" fill="none" stroke="#c5c2a6" stroke-width="0.9"/>
<path d="M1614.5,658.4 C1616.2,667.6 1624.9,690.7 1624.9,713.8 C1624.9,736.9 1615.1,774.3 1614.5,796.8 C1613.9,819.3 1616.8,837.2 1621.4,848.7 C1626.0,860.2 1636.4,855.0 1642.2,866.0 C1648.0,877.0 1649.7,898.5 1656.0,914.5 C1662.3,930.5 1676.0,954.1 1680.0,962.0" fill="none" stroke="#c5c2a6" stroke-width="0.9"/>
<path d="M1635.3,658.4 C1639.9,658.4 1653.2,656.7 1663.0,658.4 C1672.8,660.1 1687.8,663.0 1694.1,668.8 C1700.4,674.6 1699.8,674.0 1701.0,693.0 C1702.2,712.0 1699.5,766.9 1701.0,783.0 C1702.5,799.1 1708.5,788.8 1710.0,789.9" fill="none" stroke="#c5c2a6" stroke-width="0.9"/>
<path d="M1441.5,866.0 C1442.1,871.8 1440.4,901.2 1445.0,900.6 C1449.6,900.0 1465.2,868.9 1469.2,862.6" fill="none" stroke="#c5c2a6" stroke-width="0.9"/>
<path d="M1400.0,717.2 C1401.7,716.6 1409.2,707.4 1410.4,713.8 C1411.6,720.1 1408.6,746.1 1406.9,755.3 C1405.2,764.5 1401.2,766.8 1400.0,769.1" fill="none" stroke="#c5c2a6" stroke-width="0.9"/>
<path d="M1659.0,817.6 C1661.7,814.7 1669.0,800.4 1675.0,800.0 C1681.0,799.6 1689.2,808.3 1695.0,815.0 C1700.8,821.7 1707.5,835.8 1710.0,840.0" fill="none" stroke="#c5c2a6" stroke-width="0.9"/>
<path d="M603.0,470.0 C607.5,466.7 620.5,452.5 630.0,450.0 C639.5,447.5 650.0,451.7 660.0,455.0 C670.0,458.3 685.0,467.5 690.0,470.0" fill="none" stroke="#c5c2a6" stroke-width="0.9"/>
<path d="M603.0,510.0 C609.2,511.7 627.2,511.7 640.0,520.0 C652.8,528.3 670.0,546.7 680.0,560.0 C690.0,573.3 696.7,593.3 700.0,600.0" fill="none" stroke="#c5c2a6" stroke-width="0.9"/>
<path d="M800.0,440.0 C805.0,445.0 823.3,456.7 830.0,470.0 C836.7,483.3 841.7,505.0 840.0,520.0 C838.3,535.0 823.3,553.3 820.0,560.0" fill="none" stroke="#c5c2a6" stroke-width="0.9"/>
<path d="M770.0,450.0 C775.0,455.0 794.2,465.0 800.0,480.0 C805.8,495.0 806.7,523.3 805.0,540.0 C803.3,556.7 792.5,573.3 790.0,580.0" fill="none" stroke="#c5c2a6" stroke-width="0.9"/>
<path d="M603.0,760.0 C609.2,763.3 628.8,775.0 640.0,780.0 C651.2,785.0 660.0,790.0 670.0,790.0 C680.0,790.0 695.0,781.7 700.0,780.0" fill="none" stroke="#c5c2a6" stroke-width="0.9"/>
<path d="M610.0,900.0 C618.3,898.3 641.7,890.0 660.0,890.0 C678.3,890.0 700.0,893.3 720.0,900.0 C740.0,906.7 770.0,925.0 780.0,930.0" fill="none" stroke="#c5c2a6" stroke-width="0.9"/>
<path d="M603.0,945.0 C610.8,943.3 633.8,934.5 650.0,935.0 C666.2,935.5 688.3,943.5 700.0,948.0 C711.7,952.5 716.7,959.7 720.0,962.0" fill="none" stroke="#c5c2a6" stroke-width="0.9"/>
<path d="M790.0,600.0 C791.7,608.3 795.8,633.3 800.0,650.0 C804.2,666.7 812.8,675.0 815.0,700.0 C817.2,725.0 811.7,766.7 813.0,800.0 C814.3,833.3 821.3,883.3 823.0,900.0" fill="none" stroke="#c5c2a6" stroke-width="0.9"/>
<path d="M739.0,295.0 C742.5,295.8 751.5,297.5 760.0,300.0 C768.5,302.5 780.0,305.0 790.0,310.0 C800.0,315.0 810.8,324.2 820.0,330.0 C829.2,335.8 840.8,342.5 845.0,345.0" fill="none" stroke="#c5c2a6" stroke-width="0.9"/>
<path d="M603.0,250.0 C609.2,246.7 625.5,238.3 640.0,230.0 C654.5,221.7 670.0,206.7 690.0,200.0 C710.0,193.3 748.3,191.7 760.0,190.0" fill="none" stroke="#c5c2a6" stroke-width="0.9"/>
<path d="M603.0,300.0 C610.8,298.3 633.8,296.7 650.0,290.0 C666.2,283.3 678.3,266.7 700.0,260.0 C721.7,253.3 766.7,251.7 780.0,250.0" fill="none" stroke="#c5c2a6" stroke-width="0.9"/>
<path d="M603.0,380.0 C610.8,378.3 633.8,376.7 650.0,370.0 C666.2,363.3 683.3,351.7 700.0,340.0 C716.7,328.3 741.7,306.7 750.0,300.0" fill="none" stroke="#c5c2a6" stroke-width="0.9"/>
<path d="M603.0,160.0 C609.2,158.3 627.2,151.7 640.0,150.0 C652.8,148.3 666.7,146.7 680.0,150.0 C693.3,153.3 702.3,161.7 720.0,170.0 C737.7,178.3 775.0,195.0 786.0,200.0" fill="none" stroke="#c5c2a6" stroke-width="0.9"/>
<path d="M603.0,560.0 C607.5,556.7 620.5,546.7 630.0,540.0 C639.5,533.3 648.3,523.3 660.0,520.0 C671.7,516.7 693.3,520.0 700.0,520.0" fill="none" stroke="#c5c2a6" stroke-width="0.9"/>
<path d="M603.0,640.0 C609.2,633.3 627.2,608.3 640.0,600.0 C652.8,591.7 666.7,590.0 680.0,590.0 C693.3,590.0 713.3,598.3 720.0,600.0" fill="none" stroke="#c5c2a6" stroke-width="0.9"/>
<path d="M620.0,780.0 C626.7,771.7 646.7,743.3 660.0,730.0 C673.3,716.7 685.0,705.0 700.0,700.0 C715.0,695.0 741.7,700.0 750.0,700.0" fill="none" stroke="#c5c2a6" stroke-width="0.9"/>
<path d="M999.8,100.0 C998.6,111.7 994.8,150.8 992.8,170.4 C990.8,190.0 989.6,197.8 988.0,217.4 C986.4,237.0 985.7,269.8 983.4,287.8 C981.1,305.8 978.7,316.4 974.0,325.4 C969.3,334.4 963.0,338.5 955.2,341.8 C947.4,345.1 938.7,347.3 927.0,345.4 C915.3,343.4 899.7,337.4 884.8,330.1 C869.9,322.9 851.5,310.1 837.8,301.9 C824.1,293.7 813.6,284.1 802.6,280.8 C791.6,277.5 781.0,279.6 772.0,282.0 C763.0,284.4 754.3,288.8 748.6,294.9 C742.9,301.0 738.8,309.8 738.0,318.4 C737.2,327.0 738.2,339.5 743.9,346.5 C749.6,353.5 760.3,355.1 772.0,360.6 C783.7,366.1 802.5,373.1 814.3,379.4 C826.0,385.7 835.2,392.1 842.5,398.2 C849.8,404.3 854.2,409.0 858.0,416.0 C861.8,423.0 865.5,432.3 865.0,440.0 C864.5,447.7 862.5,458.3 855.0,462.0 C847.5,465.7 830.8,461.0 820.0,462.0 C809.2,463.0 798.7,465.0 790.0,468.0 C781.3,471.0 773.0,473.0 768.0,480.0 C763.0,487.0 760.8,499.4 760.0,510.0 C759.2,520.5 761.1,532.8 763.0,543.3 C764.9,553.8 768.0,559.8 771.3,573.0 C774.6,586.2 779.9,604.9 782.9,622.5 C785.9,640.1 789.8,665.4 789.5,678.6 C789.2,691.8 786.4,689.6 781.2,701.7 C776.0,713.8 763.6,737.5 758.1,751.2 C752.6,765.0 749.6,772.7 748.2,784.2 C746.8,795.8 748.8,810.6 749.9,820.5 C751.0,830.4 753.4,837.0 754.8,843.6 C756.2,850.2 753.7,847.5 758.1,860.1 C762.5,872.8 775.7,902.5 781.2,919.5 C786.7,936.5 789.5,954.9 791.1,962.0" fill="none" stroke="#b1d3e3" stroke-width="7" stroke-linejoin="round"/>
<path d="M754.8,846.9 C746.0,848.8 716.3,853.5 702.0,858.5 C687.7,863.5 680.5,868.6 669.0,876.6 C657.5,884.6 642.6,904.1 632.7,906.3 C622.8,908.5 613.5,892.5 609.6,889.8" fill="none" stroke="#b1d3e3" stroke-width="6"/>
<path d="M975.2,100.0 C976.2,105.9 981.2,115.6 981.0,135.2 C980.8,154.8 975.6,188.1 974.0,217.4 C972.4,246.8 973.9,292.1 971.6,311.3 C969.3,330.5 965.5,328.6 960.0,332.5 C954.5,336.4 948.2,338.3 938.8,334.8 C929.4,331.3 919.2,322.3 903.5,311.3 C887.8,300.3 859.7,277.2 844.8,269.0 C829.9,260.8 825.3,262.8 814.3,262.0 C803.3,261.2 790.7,260.1 779.0,264.4 C767.3,268.7 752.5,278.0 743.9,287.8 C735.3,297.6 729.4,312.0 727.4,323.0 C725.4,334.0 725.3,345.4 732.0,353.6 C738.7,361.8 754.5,366.1 767.4,372.4 C780.3,378.7 798.3,386.6 809.6,391.2 C820.9,395.8 830.8,398.5 835.0,400.0" fill="none" stroke="#d8d5c0" stroke-width="4.2" stroke-linecap="round" stroke-linejoin="round"/>
<path d="M975.2,100.0 C976.2,105.9 981.2,115.6 981.0,135.2 C980.8,154.8 975.6,188.1 974.0,217.4 C972.4,246.8 973.9,292.1 971.6,311.3 C969.3,330.5 965.5,328.6 960.0,332.5 C954.5,336.4 948.2,338.3 938.8,334.8 C929.4,331.3 919.2,322.3 903.5,311.3 C887.8,300.3 859.7,277.2 844.8,269.0 C829.9,260.8 825.3,262.8 814.3,262.0 C803.3,261.2 790.7,260.1 779.0,264.4 C767.3,268.7 752.5,278.0 743.9,287.8 C735.3,297.6 729.4,312.0 727.4,323.0 C725.4,334.0 725.3,345.4 732.0,353.6 C738.7,361.8 754.5,366.1 767.4,372.4 C780.3,378.7 798.3,386.6 809.6,391.2 C820.9,395.8 830.8,398.5 835.0,400.0" fill="none" stroke="#f4f3f0" stroke-width="3" stroke-linecap="round" stroke-linejoin="round"/>
<path d="M1012.7,100.0 C1012.1,115.7 1011.0,166.5 1009.2,193.9 C1007.5,221.3 1004.2,244.8 1002.2,264.4 C1000.2,284.0 1003.0,295.6 997.5,311.3 C992.0,327.0 977.5,348.5 969.3,358.3 C961.1,368.1 951.7,368.1 948.2,370.0" fill="none" stroke="#d8d5c0" stroke-width="7.2" stroke-linecap="round" stroke-linejoin="round"/>
<path d="M1012.7,100.0 C1012.1,115.7 1011.0,166.5 1009.2,193.9 C1007.5,221.3 1004.2,244.8 1002.2,264.4 C1000.2,284.0 1003.0,295.6 997.5,311.3 C992.0,327.0 977.5,348.5 969.3,358.3 C961.1,368.1 951.7,368.1 948.2,370.0" fill="none" stroke="#f4f3f0" stroke-width="6" stroke-linecap="round" stroke-linejoin="round"/>
<path d="M978.7,193.9 C984.9,194.2 1003.6,192.1 1016.0,195.7 C1028.4,199.3 1044.4,212.1 1053.2,215.7 C1062.0,219.2 1061.0,213.7 1069.0,217.0 C1077.0,220.3 1092.1,228.5 1101.0,235.6 C1109.9,242.7 1117.4,251.6 1122.3,259.6 C1127.2,267.6 1128.5,274.6 1130.3,283.5 C1132.1,292.4 1133.9,304.4 1133.0,312.8 C1132.1,321.2 1127.7,329.6 1125.0,334.0 C1122.3,338.4 1114.8,336.3 1117.0,339.4 C1119.2,342.5 1134.8,350.5 1138.3,352.7" fill="none" stroke="#d8d5c0" stroke-width="4.7" stroke-linecap="round" stroke-linejoin="round"/>
<path d="M978.7,193.9 C984.9,194.2 1003.6,192.1 1016.0,195.7 C1028.4,199.3 1044.4,212.1 1053.2,215.7 C1062.0,219.2 1061.0,213.7 1069.0,217.0 C1077.0,220.3 1092.1,228.5 1101.0,235.6 C1109.9,242.7 1117.4,251.6 1122.3,259.6 C1127.2,267.6 1128.5,274.6 1130.3,283.5 C1132.1,292.4 1133.9,304.4 1133.0,312.8 C1132.1,321.2 1127.7,329.6 1125.0,334.0 C1122.3,338.4 1114.8,336.3 1117.0,339.4 C1119.2,342.5 1134.8,350.5 1138.3,352.7" fill="none" stroke="#f4f3f0" stroke-width="3.5" stroke-linecap="round" stroke-linejoin="round"/>
<path d="M1114.4,294.1 C1117.0,294.1 1127.4,294.0 1130.0,294.0" fill="none" stroke="#d8d5c0" stroke-width="4.2" stroke-linecap="round" stroke-linejoin="round"/>
<path d="M1114.4,294.1 C1117.0,294.1 1127.4,294.0 1130.0,294.0" fill="none" stroke="#f4f3f0" stroke-width="3" stroke-linecap="round" stroke-linejoin="round"/>
<path d="M809.6,309.0 C814.3,313.3 825.3,330.9 837.8,334.8 C850.3,338.7 867.2,327.4 884.8,332.5 C902.4,337.6 931.0,358.7 943.5,365.3 C956.0,371.9 957.2,370.9 960.0,372.0" fill="none" stroke="#d8d5c0" stroke-width="6.2" stroke-linecap="round" stroke-linejoin="round"/>
<path d="M809.6,309.0 C814.3,313.3 825.3,330.9 837.8,334.8 C850.3,338.7 867.2,327.4 884.8,332.5 C902.4,337.6 931.0,358.7 943.5,365.3 C956.0,371.9 957.2,370.9 960.0,372.0" fill="none" stroke="#f4f3f0" stroke-width="5" stroke-linecap="round" stroke-linejoin="round"/>
<path d="M828.4,346.5 C831.9,350.4 842.9,361.4 849.5,370.0 C856.1,378.6 865.2,393.5 868.3,398.2" fill="none" stroke="#d8d5c0" stroke-width="5.2" stroke-linecap="round" stroke-linejoin="round"/>
<path d="M828.4,346.5 C831.9,350.4 842.9,361.4 849.5,370.0 C856.1,378.6 865.2,393.5 868.3,398.2" fill="none" stroke="#f4f3f0" stroke-width="4" stroke-linecap="round" stroke-linejoin="round"/>
<path d="M764.7,540.0 C763.9,544.4 759.0,552.6 759.8,566.4 C760.6,580.1 768.9,602.7 769.7,622.5 C770.5,642.3 768.8,660.5 764.7,685.2 C760.6,710.0 746.0,744.0 744.9,771.0 C743.8,798.0 751.0,819.4 758.1,846.9 C765.2,874.4 781.2,916.9 787.8,936.0 C794.4,955.1 796.1,957.5 797.7,961.8" fill="none" stroke="#d8d5c0" stroke-width="4.2" stroke-linecap="round" stroke-linejoin="round"/>
<path d="M764.7,540.0 C763.9,544.4 759.0,552.6 759.8,566.4 C760.6,580.1 768.9,602.7 769.7,622.5 C770.5,642.3 768.8,660.5 764.7,685.2 C760.6,710.0 746.0,744.0 744.9,771.0 C743.8,798.0 751.0,819.4 758.1,846.9 C765.2,874.4 781.2,916.9 787.8,936.0 C794.4,955.1 796.1,957.5 797.7,961.8" fill="none" stroke="#f4f3f0" stroke-width="3" stroke-linecap="round" stroke-linejoin="round"/>
<path d="M758.1,850.2 C747.6,852.7 716.3,853.0 695.4,865.1 C674.5,877.2 643.2,913.2 632.7,922.8" fill="none" stroke="#d8d5c0" stroke-width="4.2" stroke-linecap="round" stroke-linejoin="round"/>
<path d="M758.1,850.2 C747.6,852.7 716.3,853.0 695.4,865.1 C674.5,877.2 643.2,913.2 632.7,922.8" fill="none" stroke="#f4f3f0" stroke-width="3" stroke-linecap="round" stroke-linejoin="round"/>
<path d="M792.8,540.0 C794.7,546.0 800.7,558.7 804.3,576.3 C807.9,593.9 809.8,620.9 814.2,645.6 C818.6,670.4 828.0,711.6 830.7,724.8" fill="none" stroke="#d8d5c0" stroke-width="6.2" stroke-linecap="round" stroke-linejoin="round"/>
<path d="M792.8,540.0 C794.7,546.0 800.7,558.7 804.3,576.3 C807.9,593.9 809.8,620.9 814.2,645.6 C818.6,670.4 828.0,711.6 830.7,724.8" fill="none" stroke="#f4f3f0" stroke-width="5" stroke-linecap="round" stroke-linejoin="round"/>
<path d="M1451.8,100.0 C1452.0,109.9 1456.2,143.1 1453.2,159.4 C1450.2,175.7 1438.7,184.7 1434.0,198.0 C1429.3,211.3 1429.5,228.1 1425.0,239.5 C1420.5,250.9 1414.1,255.9 1407.2,266.3 C1400.3,276.7 1393.4,293.0 1383.5,301.9 C1373.6,310.8 1359.7,317.7 1347.8,319.7 C1335.9,321.7 1325.5,313.3 1312.2,313.8 C1298.9,314.3 1276.6,316.3 1267.7,322.7 C1258.8,329.1 1260.5,332.8 1258.8,352.4 C1257.1,371.9 1258.2,416.1 1257.3,440.0 C1256.4,463.9 1250.2,483.2 1253.6,496.0 C1257.0,508.8 1265.3,506.7 1277.7,516.5 C1290.1,526.3 1313.3,548.4 1328.0,554.8 C1342.7,561.2 1356.7,550.1 1366.0,554.8 C1375.3,559.4 1378.7,571.1 1383.7,582.7 C1388.7,594.3 1394.8,610.6 1396.0,624.5 C1397.2,638.4 1385.2,653.8 1390.7,666.0 C1396.2,678.2 1422.0,684.8 1429.0,697.6 C1436.0,710.4 1433.7,728.9 1432.5,742.8 C1431.3,756.7 1423.8,767.6 1422.0,781.0 C1420.2,794.4 1419.7,813.2 1422.0,823.0 C1424.3,832.8 1435.4,833.7 1436.0,840.0 C1436.6,846.3 1424.9,852.2 1425.5,861.0 C1426.1,869.8 1438.2,883.3 1439.4,892.6 C1440.6,901.9 1437.7,910.5 1432.5,916.9 C1427.3,923.3 1412.1,928.6 1408.0,930.9" fill="none" stroke="#d8d5c0" stroke-width="5.2" stroke-linecap="round" stroke-linejoin="round"/>
<path d="M1451.8,100.0 C1452.0,109.9 1456.2,143.1 1453.2,159.4 C1450.2,175.7 1438.7,184.7 1434.0,198.0 C1429.3,211.3 1429.5,228.1 1425.0,239.5 C1420.5,250.9 1414.1,255.9 1407.2,266.3 C1400.3,276.7 1393.4,293.0 1383.5,301.9 C1373.6,310.8 1359.7,317.7 1347.8,319.7 C1335.9,321.7 1325.5,313.3 1312.2,313.8 C1298.9,314.3 1276.6,316.3 1267.7,322.7 C1258.8,329.1 1260.5,332.8 1258.8,352.4 C1257.1,371.9 1258.2,416.1 1257.3,440.0 C1256.4,463.9 1250.2,483.2 1253.6,496.0 C1257.0,508.8 1265.3,506.7 1277.7,516.5 C1290.1,526.3 1313.3,548.4 1328.0,554.8 C1342.7,561.2 1356.7,550.1 1366.0,554.8 C1375.3,559.4 1378.7,571.1 1383.7,582.7 C1388.7,594.3 1394.8,610.6 1396.0,624.5 C1397.2,638.4 1385.2,653.8 1390.7,666.0 C1396.2,678.2 1422.0,684.8 1429.0,697.6 C1436.0,710.4 1433.7,728.9 1432.5,742.8 C1431.3,756.7 1423.8,767.6 1422.0,781.0 C1420.2,794.4 1419.7,813.2 1422.0,823.0 C1424.3,832.8 1435.4,833.7 1436.0,840.0 C1436.6,846.3 1424.9,852.2 1425.5,861.0 C1426.1,869.8 1438.2,883.3 1439.4,892.6 C1440.6,901.9 1437.7,910.5 1432.5,916.9 C1427.3,923.3 1412.1,928.6 1408.0,930.9" fill="none" stroke="#f4f3f0" stroke-width="4" stroke-linecap="round" stroke-linejoin="round"/>
<path d="M1214.2,100.0 C1216.7,103.5 1219.1,110.9 1229.0,120.8 C1238.9,130.7 1265.2,148.0 1273.6,159.4 C1282.0,170.8 1274.0,164.8 1279.5,189.0 C1285.0,213.2 1300.8,284.1 1306.3,304.9 C1311.8,325.7 1311.2,312.3 1312.2,313.8" fill="none" stroke="#d8d5c0" stroke-width="5.2" stroke-linecap="round" stroke-linejoin="round"/>
<path d="M1214.2,100.0 C1216.7,103.5 1219.1,110.9 1229.0,120.8 C1238.9,130.7 1265.2,148.0 1273.6,159.4 C1282.0,170.8 1274.0,164.8 1279.5,189.0 C1285.0,213.2 1300.8,284.1 1306.3,304.9 C1311.8,325.7 1311.2,312.3 1312.2,313.8" fill="none" stroke="#f4f3f0" stroke-width="4" stroke-linecap="round" stroke-linejoin="round"/>
<path d="M1125.0,153.2 C1130.8,157.6 1150.3,171.4 1159.6,179.8 C1168.9,188.2 1171.3,197.2 1180.9,203.7 C1190.5,210.2 1209.7,212.3 1217.2,218.8 C1224.7,225.3 1220.2,233.1 1226.1,242.5 C1232.0,251.9 1245.9,261.8 1252.8,275.2 C1259.7,288.6 1265.2,314.8 1267.7,322.7" fill="none" stroke="#d8d5c0" stroke-width="5.2" stroke-linecap="round" stroke-linejoin="round"/>
<path d="M1125.0,153.2 C1130.8,157.6 1150.3,171.4 1159.6,179.8 C1168.9,188.2 1171.3,197.2 1180.9,203.7 C1190.5,210.2 1209.7,212.3 1217.2,218.8 C1224.7,225.3 1220.2,233.1 1226.1,242.5 C1232.0,251.9 1245.9,261.8 1252.8,275.2 C1259.7,288.6 1265.2,314.8 1267.7,322.7" fill="none" stroke="#f4f3f0" stroke-width="4" stroke-linecap="round" stroke-linejoin="round"/>
<path d="M1130.3,283.5 C1137.0,285.9 1157.7,296.3 1170.2,298.1 C1182.7,299.9 1195.5,293.4 1205.3,294.5 C1215.1,295.6 1220.1,300.4 1229.0,304.9 C1237.9,309.3 1253.8,318.5 1258.8,321.2" fill="none" stroke="#d8d5c0" stroke-width="5.2" stroke-linecap="round" stroke-linejoin="round"/>
<path d="M1130.3,283.5 C1137.0,285.9 1157.7,296.3 1170.2,298.1 C1182.7,299.9 1195.5,293.4 1205.3,294.5 C1215.1,295.6 1220.1,300.4 1229.0,304.9 C1237.9,309.3 1253.8,318.5 1258.8,321.2" fill="none" stroke="#f4f3f0" stroke-width="4" stroke-linecap="round" stroke-linejoin="round"/>
<path d="M1258.8,404.3 C1265.7,403.6 1287.6,401.0 1300.0,400.0 C1312.4,399.0 1327.5,398.7 1333.0,398.4" fill="none" stroke="#d8d5c0" stroke-width="4.2" stroke-linecap="round" stroke-linejoin="round"/>
<path d="M1258.8,404.3 C1265.7,403.6 1287.6,401.0 1300.0,400.0 C1312.4,399.0 1327.5,398.7 1333.0,398.4" fill="none" stroke="#f4f3f0" stroke-width="3" stroke-linecap="round" stroke-linejoin="round"/>
<path d="M1258.8,411.8 C1253.3,414.0 1231.5,422.8 1226.0,425.0" fill="none" stroke="#d8d5c0" stroke-width="4.2" stroke-linecap="round" stroke-linejoin="round"/>
<path d="M1258.8,411.8 C1253.3,414.0 1231.5,422.8 1226.0,425.0" fill="none" stroke="#f4f3f0" stroke-width="3" stroke-linecap="round" stroke-linejoin="round"/>
<path d="M1253.6,492.4 C1245.6,495.3 1213.4,506.7 1205.4,509.6" fill="none" stroke="#d8d5c0" stroke-width="4.2" stroke-linecap="round" stroke-linejoin="round"/>
<path d="M1253.6,492.4 C1245.6,495.3 1213.4,506.7 1205.4,509.6" fill="none" stroke="#f4f3f0" stroke-width="3" stroke-linecap="round" stroke-linejoin="round"/>
<path d="M1432.5,742.8 C1449.9,730.0 1513.2,682.8 1537.0,666.0 C1560.8,649.2 1564.6,655.8 1575.0,641.9 C1585.4,628.0 1592.0,595.5 1599.6,582.7 C1607.2,569.9 1611.3,568.8 1620.5,565.3 C1629.7,561.8 1640.1,556.0 1655.0,561.8 C1669.9,567.6 1700.8,593.6 1710.0,600.0" fill="none" stroke="#d8d5c0" stroke-width="5.2" stroke-linecap="round" stroke-linejoin="round"/>
<path d="M1432.5,742.8 C1449.9,730.0 1513.2,682.8 1537.0,666.0 C1560.8,649.2 1564.6,655.8 1575.0,641.9 C1585.4,628.0 1592.0,595.5 1599.6,582.7 C1607.2,569.9 1611.3,568.8 1620.5,565.3 C1629.7,561.8 1640.1,556.0 1655.0,561.8 C1669.9,567.6 1700.8,593.6 1710.0,600.0" fill="none" stroke="#f4f3f0" stroke-width="4" stroke-linecap="round" stroke-linejoin="round"/>
<path d="M1575.0,641.9 C1578.3,651.6 1590.3,681.5 1595.0,700.0 C1599.7,718.5 1601.7,744.2 1603.0,753.0" fill="none" stroke="#d8d5c0" stroke-width="4.2" stroke-linecap="round" stroke-linejoin="round"/>
<path d="M1575.0,641.9 C1578.3,651.6 1590.3,681.5 1595.0,700.0 C1599.7,718.5 1601.7,744.2 1603.0,753.0" fill="none" stroke="#f4f3f0" stroke-width="3" stroke-linecap="round" stroke-linejoin="round"/>
<path d="M1420.0,784.6 C1414.0,788.1 1389.8,802.0 1383.7,805.5" fill="none" stroke="#d8d5c0" stroke-width="4.2" stroke-linecap="round" stroke-linejoin="round"/>
<path d="M1420.0,784.6 C1414.0,788.1 1389.8,802.0 1383.7,805.5" fill="none" stroke="#f4f3f0" stroke-width="3" stroke-linecap="round" stroke-linejoin="round"/>
<path d="M1453.4,823.0 C1461.5,823.6 1488.1,821.2 1502.0,826.4 C1515.9,831.6 1531.2,841.5 1537.0,854.3 C1542.8,867.1 1527.7,887.3 1537.0,903.0 C1546.3,918.7 1578.2,938.5 1592.7,948.3 C1607.2,958.1 1618.8,959.7 1624.0,962.0" fill="none" stroke="#d8d5c0" stroke-width="4.2" stroke-linecap="round" stroke-linejoin="round"/>
<path d="M1453.4,823.0 C1461.5,823.6 1488.1,821.2 1502.0,826.4 C1515.9,831.6 1531.2,841.5 1537.0,854.3 C1542.8,867.1 1527.7,887.3 1537.0,903.0 C1546.3,918.7 1578.2,938.5 1592.7,948.3 C1607.2,958.1 1618.8,959.7 1624.0,962.0" fill="none" stroke="#f4f3f0" stroke-width="3" stroke-linecap="round" stroke-linejoin="round"/>
<path d="M1453.0,833.4 C1461.2,843.8 1493.8,880.3 1502.0,896.0 C1510.2,911.7 1506.7,918.7 1502.0,927.4 C1497.3,936.1 1487.9,944.2 1474.0,948.3 C1460.1,952.4 1427.8,951.2 1418.6,951.8" fill="none" stroke="#d8d5c0" stroke-width="4.2" stroke-linecap="round" stroke-linejoin="round"/>
<path d="M1453.0,833.4 C1461.2,843.8 1493.8,880.3 1502.0,896.0 C1510.2,911.7 1506.7,918.7 1502.0,927.4 C1497.3,936.1 1487.9,944.2 1474.0,948.3 C1460.1,952.4 1427.8,951.2 1418.6,951.8" fill="none" stroke="#f4f3f0" stroke-width="3" stroke-linecap="round" stroke-linejoin="round"/>
<path d="M1606.6,948.3 C1611.2,943.1 1619.9,919.9 1634.4,917.0 C1648.9,914.1 1681.8,923.5 1693.6,931.0 C1705.4,938.5 1703.1,956.8 1705.0,962.0" fill="none" stroke="#d8d5c0" stroke-width="4.2" stroke-linecap="round" stroke-linejoin="round"/>
<path d="M1606.6,948.3 C1611.2,943.1 1619.9,919.9 1634.4,917.0 C1648.9,914.1 1681.8,923.5 1693.6,931.0 C1705.4,938.5 1703.1,956.8 1705.0,962.0" fill="none" stroke="#f4f3f0" stroke-width="3" stroke-linecap="round" stroke-linejoin="round"/>
<path d="M809.0,308.0 L818.0,312.0 L826.0,330.0 L840.0,334.0 L830.0,345.0 L823.0,340.0 Z" fill="#f4f3f0"/>
<path d="M595.0,92.0 L688.0,92.0 L691.0,100.0 L700.4,114.1 L786.1,151.7 L788.5,246.7 L741.5,271.4 L715.7,325.4 L733.3,380.6 L748.6,381.8 L772.0,399.4 L806.5,401.0 L837.4,402.8 L853.0,421.8 L847.8,430.3 L827.0,447.6 L799.6,449.3 L768.6,442.4 L744.5,447.6 L727.3,464.8 L717.0,492.3 L703.2,495.7 L691.2,506.0 L679.0,537.0 L675.6,546.6 L655.8,566.4 L650.9,589.5 L632.7,607.7 L603.0,599.4 L595.0,599.0 Z" fill="#f49f98" fill-opacity="0.9" stroke="#f6f231" stroke-width="3.2" stroke-linejoin="round"/>
<path d="M595.0,649.0 L603.0,649.0 L612.9,653.9 L612.9,665.4 L606.3,675.3 L603.0,676.0 L595.0,676.0 L595.0,728.0 L603.0,728.1 L609.6,729.8 L621.2,724.8 L632.7,711.6 L647.6,708.3 L645.9,691.8 L652.5,668.7 L665.7,642.3 L654.2,619.2 L662.4,607.7 L695.4,599.4 L716.9,581.3 L738.3,592.8 L769.7,622.5 L771.3,665.4 L782.9,701.7 L768.0,731.4 L735.0,767.7 L726.8,785.9 L700.4,807.3 L683.9,802.4 L665.7,794.1 L662.4,805.7 L603.0,850.2 L595.0,855.0 Z" fill="#f49f98" fill-opacity="0.9" stroke="#f6f231" stroke-width="3.2" stroke-linejoin="round"/>
<path d="M595.0,880.0 L603.0,886.5 L629.4,922.8 L627.8,934.4 L603.0,937.7 L595.0,938.0 Z" fill="#f49f98" fill-opacity="0.9" stroke="#f6f231" stroke-width="3.2" stroke-linejoin="round"/>
<rect x="603" y="100" width="2" height="862" fill="none"/>
<path d="M995.7,332.3 L1002.6,335.0 L988.8,375.3 L1014.3,402.8 L1098.5,414.1 L1121.2,425.5 L1106.2,548.4 L1114.4,541.6 L1140.0,572.0 L1182.7,634.9 L1219.1,730.5 L1219.1,778.3 L1194.0,837.4 L1140.0,866.5 L1093.9,887.5 L998.3,962.0 L886.8,962.0 L848.9,903.0 L827.4,858.5 L832.4,724.8 L814.2,652.2 L804.3,586.2 L822.5,540.0 L837.4,506.0 L877.0,499.0 L885.6,482.0 L891.4,480.1 L896.0,450.5 L880.0,430.0 L863.0,408.0 L880.5,396.0 L936.9,380.0 L964.8,371.8 L980.2,365.0 Z" fill="#f8bdb9" fill-opacity="0.9" stroke="#eeea70" stroke-width="3.6" stroke-linejoin="round"/>
<path d="M995.7,332.3 L1002.6,335.0 L988.8,375.3 L1014.3,402.8 L1098.5,414.1 L1121.2,425.5 L1106.2,548.4 L1114.4,541.6 L1140.0,572.0 L1182.7,634.9 L1219.1,730.5 L1219.1,778.3 L1194.0,837.4 L1140.0,866.5 L1093.9,887.5 L998.3,962.0 L886.8,962.0 L848.9,903.0 L827.4,858.5 L832.4,724.8 L814.2,652.2 L804.3,586.2 L822.5,540.0 L837.4,506.0 L877.0,499.0 L885.6,482.0 L891.4,480.1 L896.0,450.5 L880.0,430.0 L863.0,408.0 L880.5,396.0 L936.9,380.0 L964.8,371.8 L980.2,365.0 Z" fill="none" stroke="#5c5d58" stroke-width="3.2" stroke-linejoin="round"/>
<path d="M1003.0,462.0 C1008.3,454.8 1022.3,455.7 1030.0,457.0 C1037.7,458.3 1046.3,462.8 1049.0,470.0 C1051.7,477.2 1050.0,493.5 1046.0,500.0 C1042.0,506.5 1033.0,509.0 1025.0,509.0 C1017.0,509.0 1001.7,507.8 998.0,500.0 C994.3,492.2 997.7,469.2 1003.0,462.0 Z" fill="#e9bbbd"/>
<path d="M971.0,487.0 C973.3,486.5 982.2,488.5 984.0,490.0 C985.8,491.5 984.3,495.5 982.0,496.0 C979.7,496.5 971.8,494.5 970.0,493.0 C968.2,491.5 968.7,487.5 971.0,487.0 Z" fill="#e9bbbd"/>
<path d="M944.5,380.0 C943.6,384.7 941.1,398.2 938.9,408.2 C936.7,418.2 935.1,428.4 931.3,440.0 C927.5,451.6 919.1,467.6 916.3,477.6 C913.5,487.6 913.1,492.7 914.4,500.2 C915.6,507.7 917.8,517.7 923.8,522.7 C929.8,527.7 942.0,530.2 950.1,530.2 C958.2,530.2 966.4,525.2 972.7,522.7 C979.0,520.2 985.2,516.5 987.7,515.2" fill="none" stroke="#f8c5c2" stroke-width="6" stroke-linecap="round"/>
<path d="M875.0,526.4 C883.1,526.1 915.7,524.9 923.8,524.6" fill="none" stroke="#f8c5c2" stroke-width="4" stroke-linecap="round"/>
<path d="M980.2,404.4 C991.5,411.3 1036.5,438.8 1047.8,445.7" fill="none" stroke="#f8c5c2" stroke-width="6" stroke-linecap="round"/>
<path d="M970.8,417.6 C970.8,423.8 970.2,440.6 970.8,455.0 C971.4,469.4 971.1,493.3 974.5,504.0 C977.9,514.7 987.6,512.8 991.4,519.0 C995.1,525.2 996.4,533.4 997.0,541.5 C997.6,549.6 997.7,557.2 995.2,567.8 C992.7,578.4 986.0,594.9 982.0,605.3 C978.0,615.7 976.6,622.8 971.0,630.0 C965.4,637.2 952.1,645.4 948.3,648.5" fill="none" stroke="#f8c5c2" stroke-width="5" stroke-linecap="round"/>
<path d="M940.7,455.0 C943.8,460.6 954.2,478.9 959.5,488.9 C964.8,498.9 970.5,510.8 972.7,515.2" fill="none" stroke="#f8c5c2" stroke-width="4" stroke-linecap="round"/>
<path d="M1029.0,451.3 C1024.3,455.1 1007.1,465.4 1000.8,473.9 C994.5,482.3 993.0,497.3 991.4,502.0" fill="none" stroke="#f8c5c2" stroke-width="4" stroke-linecap="round"/>
<path d="M998.3,562.0 C1003.6,560.8 1019.4,557.3 1030.0,555.0 C1040.6,552.7 1050.6,541.9 1062.0,548.4 C1073.4,554.9 1086.3,572.0 1098.5,594.0 C1110.7,616.0 1122.9,653.9 1135.0,680.4 C1147.1,706.9 1165.2,741.1 1171.3,753.2" fill="none" stroke="#f8c5c2" stroke-width="5" stroke-linecap="round"/>
<path d="M1002.7,567.8 C1012.4,564.3 1047.8,547.1 1061.0,547.1 C1074.2,547.1 1076.3,558.1 1081.6,567.8 C1086.9,577.5 1090.9,599.0 1092.8,605.3" fill="none" stroke="#f8c5c2" stroke-width="4" stroke-linecap="round"/>
<path d="M1039.3,653.0 C1041.6,660.6 1051.5,684.9 1053.0,698.6 C1054.5,712.3 1055.2,725.9 1048.4,735.0 C1041.6,744.1 1018.1,750.2 1012.0,753.2" fill="none" stroke="#f8c5c2" stroke-width="5" stroke-linecap="round"/>
<path d="M1030.2,762.3 C1023.3,766.8 1002.6,785.8 989.0,789.6 C975.4,793.4 955.1,785.8 948.3,785.0" fill="none" stroke="#f8c5c2" stroke-width="5" stroke-linecap="round"/>
<path d="M875.0,577.2 C878.8,584.1 893.8,611.6 897.6,618.5" fill="none" stroke="#f8c5c2" stroke-width="4" stroke-linecap="round"/>
<path d="M944.0,423.0 C947.5,423.0 959.8,418.5 965.0,423.0 C970.2,427.5 973.3,445.5 975.0,450.0" fill="none" stroke="#f8c5c2" stroke-width="3" stroke-linecap="round"/>
<path d="M850.0,560.0 C853.3,566.7 865.0,576.7 870.0,600.0 C875.0,623.3 875.0,666.7 880.0,700.0 C885.0,733.3 891.7,771.7 900.0,800.0 C908.3,828.3 915.0,850.0 930.0,870.0 C945.0,890.0 980.0,911.7 990.0,920.0" fill="none" stroke="#e3a9a3" stroke-width="0.8" opacity="0.5"/>
<path d="M1100.0,620.0 C1105.0,630.0 1121.7,660.0 1130.0,680.0 C1138.3,700.0 1145.0,720.0 1150.0,740.0 C1155.0,760.0 1160.0,781.7 1160.0,800.0 C1160.0,818.3 1151.7,841.7 1150.0,850.0" fill="none" stroke="#e3a9a3" stroke-width="0.8" opacity="0.5"/>
<path d="M1120.0,600.0 C1126.7,608.3 1148.3,630.0 1160.0,650.0 C1171.7,670.0 1183.3,698.3 1190.0,720.0 C1196.7,741.7 1198.3,770.0 1200.0,780.0" fill="none" stroke="#e3a9a3" stroke-width="0.8" opacity="0.5"/>
<path d="M880.0,860.0 C890.0,863.3 920.0,876.7 940.0,880.0 C960.0,883.3 980.0,883.3 1000.0,880.0 C1020.0,876.7 1040.0,866.7 1060.0,860.0 C1080.0,853.3 1110.0,843.3 1120.0,840.0" fill="none" stroke="#e3a9a3" stroke-width="0.8" opacity="0.5"/>
<path d="M900.0,900.0 C910.0,903.3 940.0,918.3 960.0,920.0 C980.0,921.7 1000.0,915.0 1020.0,910.0 C1040.0,905.0 1070.0,893.3 1080.0,890.0" fill="none" stroke="#e3a9a3" stroke-width="0.8" opacity="0.5"/>
<path d="M1050.0,600.0 C1055.0,610.0 1071.7,640.0 1080.0,660.0 C1088.3,680.0 1093.3,700.0 1100.0,720.0 C1106.7,740.0 1113.3,763.3 1120.0,780.0 C1126.7,796.7 1136.7,813.3 1140.0,820.0" fill="none" stroke="#e3a9a3" stroke-width="0.8" opacity="0.5"/>
<path d="M960.0,660.0 C966.7,665.0 986.7,680.0 1000.0,690.0 C1013.3,700.0 1026.7,705.0 1040.0,720.0 C1053.3,735.0 1070.0,761.7 1080.0,780.0 C1090.0,798.3 1096.7,821.7 1100.0,830.0" fill="none" stroke="#e3a9a3" stroke-width="0.8" opacity="0.5"/>
<path d="M1060.0,430.0 C1065.0,438.3 1083.3,461.7 1090.0,480.0 C1096.7,498.3 1098.3,530.0 1100.0,540.0" fill="none" stroke="#e3a9a3" stroke-width="0.8" opacity="0.5"/>
<path d="M603.0,180.0 C607.5,176.7 620.5,161.7 630.0,160.0 C639.5,158.3 650.0,163.3 660.0,170.0 C670.0,176.7 676.7,192.5 690.0,200.0 C703.3,207.5 724.0,210.0 740.0,215.0 C756.0,220.0 778.3,227.5 786.0,230.0" fill="none" stroke="#e3a9a3" stroke-width="0.8" opacity="0.5"/>
<path d="M603.0,240.0 C609.2,235.8 627.2,218.3 640.0,215.0 C652.8,211.7 666.7,215.8 680.0,220.0 C693.3,224.2 702.3,233.0 720.0,240.0 C737.7,247.0 775.0,258.3 786.0,262.0" fill="none" stroke="#e3a9a3" stroke-width="0.8" opacity="0.5"/>
<path d="M603.0,330.0 C610.8,323.3 633.8,300.0 650.0,290.0 C666.2,280.0 684.2,273.3 700.0,270.0 C715.8,266.7 737.5,270.0 745.0,270.0" fill="none" stroke="#e3a9a3" stroke-width="0.8" opacity="0.5"/>
<path d="M610.0,410.0 C618.3,401.7 641.7,372.5 660.0,360.0 C678.3,347.5 710.0,339.2 720.0,335.0" fill="none" stroke="#e3a9a3" stroke-width="0.8" opacity="0.5"/>
<path d="M603.0,470.0 C610.8,463.3 633.8,440.8 650.0,430.0 C666.2,419.2 681.7,410.0 700.0,405.0 C718.3,400.0 750.0,400.8 760.0,400.0" fill="none" stroke="#e3a9a3" stroke-width="0.8" opacity="0.5"/>
<path d="M620.0,115.0 C625.0,118.3 638.3,132.8 650.0,135.0 C661.7,137.2 675.0,125.5 690.0,128.0 C705.0,130.5 731.7,146.3 740.0,150.0" fill="none" stroke="#e3a9a3" stroke-width="0.8" opacity="0.5"/>
<path d="M603.0,540.0 C607.5,536.7 618.8,525.8 630.0,520.0 C641.2,514.2 658.3,509.2 670.0,505.0 C681.7,500.8 695.0,496.7 700.0,495.0" fill="none" stroke="#e3a9a3" stroke-width="0.8" opacity="0.5"/>
<path d="M640.0,690.0 C646.7,683.3 666.7,660.0 680.0,650.0 C693.3,640.0 708.3,631.7 720.0,630.0 C731.7,628.3 745.0,638.3 750.0,640.0" fill="none" stroke="#e3a9a3" stroke-width="0.8" opacity="0.5"/>
<path d="M630.0,760.0 C638.3,753.3 665.0,730.0 680.0,720.0 C695.0,710.0 706.7,705.0 720.0,700.0 C733.3,695.0 753.3,691.7 760.0,690.0" fill="none" stroke="#e3a9a3" stroke-width="0.8" opacity="0.5"/>
<path d="M610.0,800.0 C616.7,795.0 635.0,776.7 650.0,770.0 C665.0,763.3 691.7,761.7 700.0,760.0" fill="none" stroke="#e3a9a3" stroke-width="0.8" opacity="0.5"/>
<path d="M603.0,163.4 C606.1,160.7 615.9,150.7 621.8,147.0 C627.7,143.3 632.3,141.0 638.2,141.0 C644.1,141.0 652.3,143.7 657.0,147.0 C661.7,150.3 662.1,157.5 666.4,161.0 C670.7,164.5 679.7,163.3 682.8,168.0 C685.9,172.7 686.8,183.1 685.2,189.0 C683.6,194.9 680.4,197.8 673.4,203.3 C666.4,208.8 653.2,215.7 643.0,222.0 C632.8,228.3 619.1,236.2 612.4,240.9 C605.7,245.6 604.6,248.7 603.0,250.3" fill="none" stroke="#db958d" stroke-width="0.8" opacity="0.6"/>
<path d="M603.0,292.5 C610.8,285.5 633.6,263.6 650.0,250.3 C666.4,237.0 687.5,220.9 701.6,212.7 C715.7,204.5 723.5,204.1 734.5,201.0 C745.5,197.9 758.8,195.8 767.4,194.0 C776.0,192.2 782.9,190.7 786.0,190.0" fill="none" stroke="#db958d" stroke-width="0.8" opacity="0.6"/>
<path d="M603.0,334.8 C612.8,325.4 642.9,294.0 661.7,278.4 C680.5,262.8 698.1,250.3 715.7,240.9 C733.3,231.5 755.7,225.8 767.4,222.0 C779.1,218.2 782.9,218.7 786.0,218.0" fill="none" stroke="#db958d" stroke-width="0.8" opacity="0.6"/>
<path d="M603.0,377.0 C614.7,365.3 651.5,325.4 673.4,306.6 C695.3,287.8 720.1,273.0 734.5,264.4 C748.9,255.8 755.8,256.6 760.0,255.0" fill="none" stroke="#db958d" stroke-width="0.8" opacity="0.6"/>
<path d="M617.0,100.0 C622.5,101.2 640.6,103.1 650.0,107.0 C659.4,110.9 666.4,122.3 673.4,123.5 C680.4,124.7 687.8,116.0 692.2,114.1 C696.6,112.2 698.7,112.3 700.0,112.0" fill="none" stroke="#db958d" stroke-width="0.8" opacity="0.6"/>
<path d="M603.0,135.2 C608.9,133.2 628.4,124.7 638.2,123.5 C648.0,122.3 654.7,124.3 661.7,128.2 C668.8,132.1 673.9,145.0 680.5,147.0 C687.1,149.0 691.7,139.5 701.6,140.0 C711.5,140.5 725.9,145.0 740.0,150.0 C754.1,155.0 778.3,166.7 786.0,170.0" fill="none" stroke="#db958d" stroke-width="0.8" opacity="0.6"/>
<path d="M603.0,430.0 C610.8,423.3 633.8,403.3 650.0,390.0 C666.2,376.7 687.5,359.2 700.0,350.0 C712.5,340.8 720.8,337.5 725.0,335.0" fill="none" stroke="#db958d" stroke-width="0.8" opacity="0.6"/>
<path d="M603.0,500.0 C609.2,495.0 625.5,480.0 640.0,470.0 C654.5,460.0 675.0,446.7 690.0,440.0 C705.0,433.3 723.3,431.7 730.0,430.0" fill="none" stroke="#db958d" stroke-width="0.8" opacity="0.6"/>
<path d="M603.0,560.0 C609.2,555.0 627.2,539.2 640.0,530.0 C652.8,520.8 670.0,510.0 680.0,505.0 C690.0,500.0 696.7,500.8 700.0,500.0" fill="none" stroke="#db958d" stroke-width="0.8" opacity="0.6"/>
<path d="M662.4,738.0 C665.7,735.8 678.4,724.8 682.2,724.8 C686.1,724.8 687.7,733.6 685.5,738.0 C683.3,742.4 674.5,750.1 669.0,751.2 C663.5,752.3 653.6,746.8 652.5,744.6 C651.4,742.4 660.8,739.1 662.4,738.0" fill="none" stroke="#db958d" stroke-width="0.8" opacity="0.6"/>
<path d="M649.2,744.6 C654.2,738.0 670.1,714.9 678.9,705.0 C687.7,695.1 694.9,688.5 702.0,685.2 C709.1,681.9 719.0,678.6 721.8,685.2 C724.5,691.8 724.0,711.6 718.5,724.8 C713.0,738.0 699.8,756.7 688.8,764.4 C677.8,772.1 659.1,774.3 652.5,771.0 C645.9,767.7 649.8,749.0 649.2,744.6" fill="none" stroke="#db958d" stroke-width="0.8" opacity="0.6"/>
<path d="M622.8,771.0 C632.1,755.6 664.0,699.5 678.9,678.6 C693.8,657.7 701.4,651.1 711.9,645.6 C722.4,640.1 735.5,638.5 741.6,645.6 C747.7,652.8 749.9,672.0 748.2,688.5 C746.6,705.0 742.2,727.6 731.7,744.6 C721.2,761.6 702.5,782.0 685.5,790.8 C668.5,799.6 638.8,796.3 629.4,797.4" fill="none" stroke="#db958d" stroke-width="0.8" opacity="0.6"/>
<path d="M603.0,800.0 C609.2,793.3 627.2,786.7 640.0,760.0 C652.8,733.3 666.7,665.0 680.0,640.0 C693.3,615.0 706.7,613.3 720.0,610.0 C733.3,606.7 753.3,618.3 760.0,620.0" fill="none" stroke="#db958d" stroke-width="0.8" opacity="0.6"/>
<text x="0" y="0" transform="translate(1262,342) rotate(-72)" font-size="9" fill="#7a8aa8" font-family="Liberation Sans, sans-serif">귀운로</text>
<text x="0" y="0" transform="translate(1428,192) rotate(-65)" font-size="9" fill="#7a8aa8" font-family="Liberation Sans, sans-serif">귀운로</text>
<text x="0" y="0" transform="translate(1383,593) rotate(70)" font-size="9" fill="#7a8aa8" font-family="Liberation Sans, sans-serif">귀운로</text>
<text x="0" y="0" transform="translate(1428,836) rotate(10)" font-size="9" fill="#7a8aa8" font-family="Liberation Sans, sans-serif">귀운로</text>
</svg><!--MAPEND-->
<!--OVSTART--><div class="a" style="left:1043px;top:124px;width:270px;height:32px;background:#fff;border:1px solid #444;border-radius:16px"></div>
<div class="a" style="left:1129px;top:126px;width:1px;height:29px;background:#eee"></div>
<div class="a" style="left:1226px;top:126px;width:1px;height:29px;background:#eee"></div>
<div class="t" style="left:1066.5px;top:133px;font-size:13px;color:#555"><span class="k">SHP분석</span></div>
<div class="t" style="left:1152px;top:133px;font-size:13px;color:#555"><span class="k">그리기분석</span></div>
<div class="t" style="left:1249.5px;top:133px;font-size:13px;color:#555"><span class="k">지적분석</span></div>
<div class="a" style="left:1318px;top:124px;width:254px;height:33px;background:#fff;border:1.5px solid #3d6ff0;border-radius:17px"></div>
<div class="a" style="left:1355px;top:126px;width:1px;height:30px;background:#eee"></div>
<div class="a" style="left:1391px;top:126px;width:1px;height:30px;background:#eee"></div>
<div class="a" style="left:1427px;top:126px;width:1px;height:30px;background:#eee"></div>
<div class="a" style="left:1463px;top:126px;width:1px;height:30px;background:#eee"></div>
<div class="a" style="left:1499px;top:126px;width:1px;height:30px;background:#eee"></div>
<div class="a" style="left:1535px;top:126px;width:1px;height:30px;background:#eee"></div>
<svg class="a" style="left:1330px;top:128px" width="240" height="26" viewBox="1330 128 240 26" fill="none" stroke="#444">
<rect x="1334.8" y="134.6" width="19.6" height="3.4" fill="#fff" stroke="#444" stroke-width="1.2"/><rect x="1334.8" y="143.9" width="19.6" height="3.4" fill="#fff" stroke="#444" stroke-width="1.2"/>
<path d="M1337 135.4v1.4M1339.5 135.4v1M1342 135.4v1.4M1344.5 135.4v1M1347 135.4v1.4M1349.5 135.4v1M1352 135.4v1.4M1337 145.2v1.4M1339.5 145.6v1M1342 145.2v1.4M1344.5 145.6v1M1347 145.2v1.4M1349.5 145.6v1M1352 145.2v1.4" stroke="#777" stroke-width="0.7"/>
<path d="M1334.8 138.4 L1354.4 143.6" stroke="#555" stroke-width="1.5"/><path d="M1343 138.3 L1345 143.8" stroke="#999" stroke-width="0.8"/>
<rect x="1364.9" y="136.9" width="12.4" height="11.6" fill="#e8e8e8" stroke="#888" stroke-width="1"/>
<path d="M1364.5 133.3h13M1364.5 131v4.5M1377.5 131v4.5M1381 136.5v12M1379 136.5h4M1379 148.5h4" stroke="#999" stroke-width="1"/>
<path d="M1415.2 136.5 A7.6 7.6 0 0 0 1402.2 137.2" stroke-width="1.9" stroke="#444"/>
<path d="M1402 143.5 A7.6 7.6 0 0 0 1415.5 143.2" stroke-width="1.9" stroke="#444"/>
<path d="M1413.5 134.2l2.6 3.4 1-3.6zM1405 146.3l-2.8-3.2-0.8 3.6z" fill="#444" stroke="#444" stroke-width="0.8"/>
<rect x="1439.5" y="132.3" width="11" height="5.5" stroke="#555" stroke-width="1" fill="#fff"/>
<rect x="1436.4" y="137.8" width="17.2" height="8" rx="1" stroke="#555" stroke-width="1" fill="#fff"/>
<rect x="1440.5" y="142.6" width="9" height="6.2" stroke="#555" stroke-width="1" fill="#fff"/>
<path d="M1442.5 145.5h5" stroke="#999" stroke-width="0.8"/>
<path d="M1481.5 132.8 L1491.4 148.3 H1471.6 Z" stroke="#444" stroke-width="1.1" fill="#fff"/>
<path d="M1481.5 137.8v5" stroke-width="1.3"/><circle cx="1481.5" cy="145.4" r="0.8" fill="#444"/><circle cx="1481.5" cy="138" r="1.1" fill="#444" stroke="none"/>
<path d="M1507.3 132.3h20.4v14.5l-2.8 2.8h-17.6z" stroke="#444" stroke-width="1.2" fill="#fff"/>
<rect x="1510.6" y="135" width="14" height="11" fill="#4a4a4a" stroke="none"/>
<path d="M1517.6 137.8v5.4M1514.9 140.5h5.4" stroke="#aaa" stroke-width="0.8"/>
<path d="M1536 132.6h20.8M1556.8 132.6v16.6" stroke="#666" stroke-width="0.9"/><path d="M1536 135h20.8" stroke="#aaa" stroke-width="1.6"/><path d="M1536 149.2h20.8" stroke="#444" stroke-width="1.2"/>
<path d="M1541.8 146.8 l0.8-2.8 6.6-6.6 2 2 -6.6 6.6z" fill="#fff" stroke="#444" stroke-width="1"/>
</svg>
<div class="a" style="left:1576px;top:124px;width:98px;height:33px;background:#fff;border:1px solid #444;border-radius:17px;overflow:hidden"><div class="a" style="left:0;top:0;width:48px;height:33px;background:#4a4b4f"></div></div>
<div class="t" style="left:1590px;top:133px;font-size:14px;color:#fff;font-weight:bold"><span class="k">일반</span></div>
<div class="t" style="left:1638px;top:133px;font-size:14px;color:#555"><span class="k">위성</span></div>
<div class="a" style="left:1650px;top:191px;width:33px;height:73px;background:#fff;border:1px solid #444;border-radius:16px"></div>
<div class="a" style="left:1651px;top:228px;width:31px;height:1px;background:#eee"></div>
<div class="a" style="left:1661px;top:209px;width:12px;height:2.8px;background:#454850"></div>
<div class="a" style="left:1665.6px;top:204.2px;width:2.8px;height:12px;background:#454850"></div>
<div class="a" style="left:1661px;top:244.8px;width:12px;height:2.8px;background:#454850"></div>
<div class="a" style="left:1658px;top:108px;width:20px;height:11px;background:#e6c23a"></div>
<div class="t" style="left:1659px;top:109px;font-size:10px;color:#333;letter-spacing:-0.5px">404</div>
<div class="t" style="left:1631px;top:369px;font-size:12.5px;color:#5a84bf;font-weight:bold"><span class="k">귀운저수지</span></div>
<div class="t" style="left:1401px;top:947px;font-size:12.5px;color:#666;font-weight:bold"><span class="k">동광기도원</span></div>
<div class="a" style="left:1132px;top:948px;width:49px;height:14px;background:#f1f1f1;border-radius:3px 3px 0 0"></div>
<svg class="a" style="left:1152px;top:952px" width="8" height="6" viewBox="0 0 8 6"><path d="M0.5 0.5h7l-3.5 5z" fill="#444"/></svg><!--OVEND-->
<!--MAP-->
<!--BTSTART--><div class="a" style="left:603px;top:962px;width:1107px;height:316px;background:#fff;border-left:1px solid #e2e2e2"></div>
<div class="a" style="left:603px;top:962px;width:1107px;height:45px;background:#efefef"></div>
<div class="a" style="left:612px;top:969px;width:153px;height:28px;background:#2e80d3;border-radius:4px"></div>
<div class="t" style="left:626px;top:976px;font-size:14px;color:#fff"><span class="k">환경영향평가</span></div>
<svg class="a" style="left:744px;top:980px" width="10" height="7" viewBox="0 0 10 7" fill="none" stroke="#fff" stroke-width="1.3"><path d="M1 1l4 4 4-4"/></svg>
<div class="a" style="left:779px;top:969px;width:114px;height:39px;background:#fff;border:1px solid #555;border-bottom:none;border-radius:4px 4px 0 0"></div>
<div class="t" style="left:815px;top:980px;font-size:13px;color:#333"><span class="k">기본정보</span></div>
<div class="t" style="left:929.7px;top:980px;font-size:13px;color:#666"><span class="k">상세정보</span></div>
<div class="t" style="left:1022px;top:980px;font-size:13px;color:#666"><span class="k">검토서 작성자정보</span></div>
<div class="t" style="left:1147px;top:980px;font-size:13px;color:#666"><span class="k">협의 진행현황</span></div>
<div class="t" style="left:1273px;top:980px;font-size:13px;color:#666"><span class="k">초안공람</span></div>
<div class="t" style="left:1377px;top:980px;font-size:13px;color:#666"><span class="k">결정내용 공개</span></div>
<div class="t" style="left:1491.4px;top:980px;font-size:13px;color:#666"><span class="k">주민의견 수렴</span></div>
<div class="t" style="left:1618px;top:980px;font-size:13px;color:#666"><span class="k">원문정보</span></div>
<div class="a" style="left:612px;top:1016px;width:1089px;height:1px;background:#e6e6e6"></div>
<div class="a" style="left:612px;top:1018px;width:144px;height:28px;background:#efefef"></div>
<div class="a" style="left:612px;top:1047px;width:1089px;height:1px;background:#e6e6e6"></div>
<div class="a" style="left:612px;top:1049px;width:144px;height:28px;background:#efefef"></div>
<div class="a" style="left:612px;top:1078px;width:1089px;height:1px;background:#e6e6e6"></div>
<div class="a" style="left:612px;top:1080px;width:144px;height:28px;background:#efefef"></div>
<div class="a" style="left:612px;top:1109px;width:1089px;height:1px;background:#e6e6e6"></div>
<div class="a" style="left:612px;top:1111px;width:144px;height:69px;background:#efefef"></div>
<div class="a" style="left:612px;top:1181px;width:1089px;height:1px;background:#e6e6e6"></div>
<div class="a" style="left:612px;top:1183px;width:144px;height:48px;background:#efefef"></div>
<div class="a" style="left:612px;top:1232px;width:1089px;height:1px;background:#e6e6e6"></div>
<div class="a" style="left:612px;top:1234px;width:144px;height:28px;background:#efefef"></div>
<div class="a" style="left:612px;top:1263px;width:1089px;height:1px;background:#e6e6e6"></div>
<div class="a" style="left:1296px;top:1080px;width:144px;height:28px;background:#efefef"></div>
<div class="t" style="left:612px;top:1024.5px;width:144px;text-align:center;font-size:14px;color:#333"><span class="c">사업번호</span></div>
<div class="t" style="left:612px;top:1055.5px;width:144px;text-align:center;font-size:14px;color:#333"><span class="c">사업명</span></div>
<div class="t" style="left:612px;top:1086.5px;width:144px;text-align:center;font-size:14px;color:#333"><span class="c">사업 등록 유형</span></div>
<div class="t" style="left:612px;top:1138.0px;width:144px;text-align:center;font-size:14px;color:#333"><span class="c">업무담당자정보</span></div>
<div class="t" style="left:612px;top:1199.5px;width:144px;text-align:center;font-size:14px;color:#333"><span class="c">홈페이지 공개여부</span></div>
<div class="t" style="left:612px;top:1240.5px;width:144px;text-align:center;font-size:14px;color:#333"><span class="c">비고(특이사항)</span></div>
<div class="t" style="left:1296px;top:1086.5px;width:144px;text-align:center;font-size:14px;color:#333"><span class="c">생태보전협력금</span></div>
<div class="t" style="left:770px;top:1026px;font-size:13px;color:#444"><span style="font-size:12.5px">WJ2011Q003</span></div>
<div class="t" style="left:770px;top:1056px;font-size:13px;color:#444"><span class="k">(주)경기개발 석산개발사업</span></div>
<div class="t" style="left:770px;top:1087px;font-size:13px;color:#444"><span class="k">본협의</span></div>
<div class="t" style="left:1453px;top:1087px;font-size:13px;color:#444"><span class="k">유</span></div>
<div class="t" style="left:770px;top:1117px;font-size:13px;color:#444"><span class="k">· 협의기관</span></div>
<div class="t" style="left:852px;top:1117px;font-size:13px;color:#444"><span class="k">원주지방환경청</span></div>
<div class="t" style="left:770px;top:1138px;font-size:13px;color:#444"><span class="k">· 담당부서</span></div>
<div class="t" style="left:770px;top:1158px;font-size:13px;color:#444"><span class="k">· 전화번호</span></div>
<div class="t" style="left:852px;top:1158px;font-size:13px;color:#444"><span style="font-size:12.8px">033-760-6402</span></div>
<div class="t" style="left:1219px;top:1117px;font-size:13px;color:#444"><span class="k">· 담당자</span></div>
<div class="t" style="left:1302px;top:1117px;font-size:13px;color:#444"><span class="k">간영진</span></div>
<div class="t" style="left:1219px;top:1138px;font-size:13px;color:#444"><span class="k">· E-mail</span></div>
<div class="t" style="left:1302px;top:1138px;font-size:13px;color:#444"><span style="font-size:12px">zinkan@naver.com</span></div>
<div class="t" style="left:1219px;top:1158px;font-size:13px;color:#444"><span class="k">· 팩스번호</span></div>
<div class="t" style="left:1302px;top:1158px;font-size:13px;color:#444"><span style="font-size:12.8px">033-765-0003</span></div>
<div class="t" style="left:770px;top:1189px;font-size:13px;color:#444"><span class="k">· 협의진행형황목록</span></div>
<div class="t" style="left:905px;top:1189px;font-size:13px;color:#444"><span class="k">공개</span></div>
<div class="t" style="left:770px;top:1210px;font-size:13px;color:#444"><span class="k">· 협의의견 파일</span></div>
<div class="t" style="left:905px;top:1210px;font-size:13px;color:#444"><span class="k">공개</span></div><!--BTEND-->
<div id="btmline" class="a" style="left:343px;top:1277px;width:1367px;height:1px;background:#e4e1cf"></div>
<div class="a" style="left:603px;top:962px;width:5px;height:315px;background:linear-gradient(to right,#e6e6e6,rgba(255,255,255,0))"></div>
<!--BOTTOM-->
</body></html>
